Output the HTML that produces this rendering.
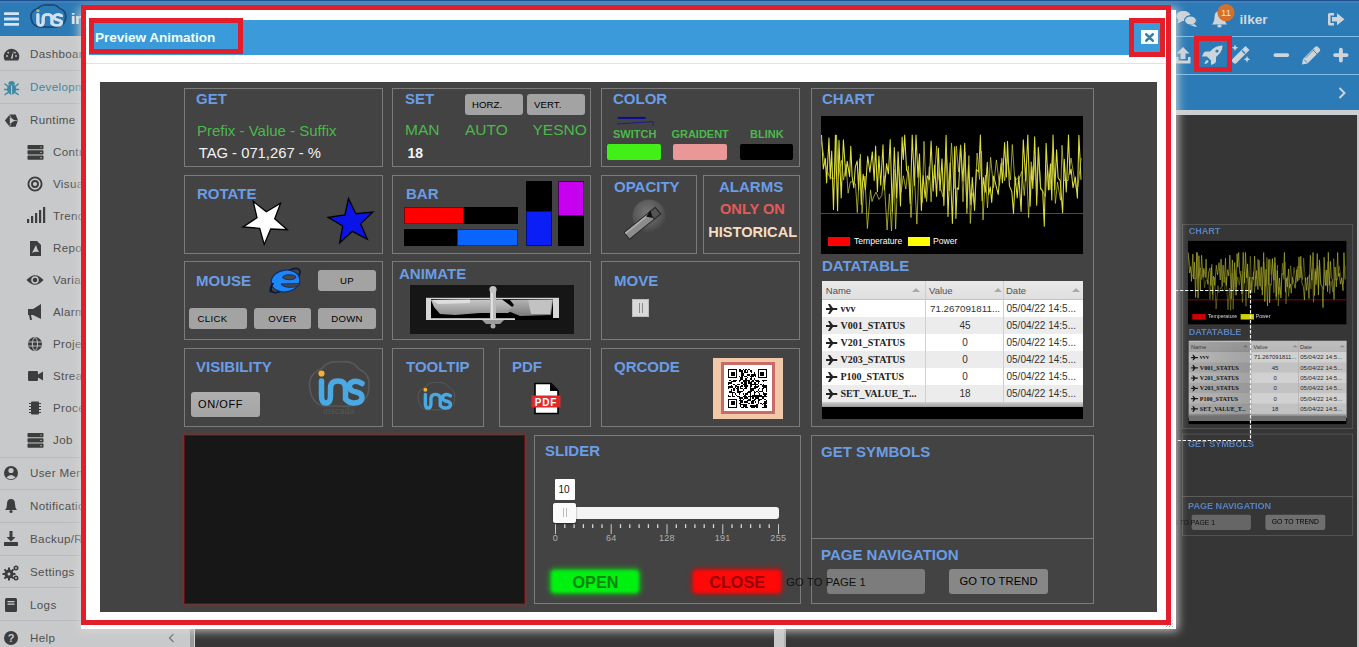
<!DOCTYPE html>
<html><head><meta charset="utf-8">
<style>
*{box-sizing:border-box;margin:0;padding:0}
html,body{width:1359px;height:647px;overflow:hidden;background:#363636;font-family:"Liberation Sans",sans-serif}
.a{position:absolute}
.nav{left:0;top:0;width:1359px;height:37px;background:#2c7bb6;border-top:1px solid #1a508f}
.side{left:0;top:36px;width:190px;height:611px;background:#c8c9ca}
.si{position:absolute;left:0;width:190px;height:33px;border-bottom:1px solid #b9babb;color:#454545;font-size:12px}
.si span{position:absolute;left:30px;top:10px}
.sub{position:absolute;left:0;width:190px;height:32px;color:#454545;font-size:12px}
.sub span{position:absolute;left:53px;top:10px}
.ic{position:absolute}
.st{font-size:11.6px;line-height:14px;white-space:nowrap;letter-spacing:0.35px}
.pn{position:absolute;border:1px solid #7b7b7b;background:#434343}
.lb{position:absolute;color:#6a9de6;font-weight:bold;font-size:15px;line-height:15px;white-space:nowrap}
.gr{color:#4cb84c}
.btn{position:absolute;background:#a9a9a9;border-radius:3px;color:#111;font-size:9px;text-align:center;white-space:nowrap}
.red{position:absolute;border:5px solid #e31e2a}
</style></head><body>

<!-- top nav -->
<div class="a nav"></div>
<!-- sidebar -->
<div class="a side" id="side"></div>
<div class="a st" style="left:30px;top:46.5px;color:#505050">Dashboard</div>
<div class="a st" style="left:30px;top:79.5px;color:#46859c">Development</div>
<div class="a st" style="left:30px;top:112.5px;color:#505050">Runtime</div>
<div class="a st" style="left:53px;top:144.5px;color:#505050">Controls</div>
<div class="a st" style="left:53px;top:176.5px;color:#505050">Visualization</div>
<div class="a st" style="left:53px;top:208.5px;color:#505050">Trends</div>
<div class="a st" style="left:53px;top:240.5px;color:#505050">Reports</div>
<div class="a st" style="left:53px;top:272.5px;color:#505050">Variables</div>
<div class="a st" style="left:53px;top:304.5px;color:#505050">Alarms</div>
<div class="a st" style="left:53px;top:336.5px;color:#505050">Projects</div>
<div class="a st" style="left:53px;top:368.5px;color:#505050">Streams</div>
<div class="a st" style="left:53px;top:400.5px;color:#505050">Processes</div>
<div class="a st" style="left:53px;top:432.5px;color:#505050">Job</div>
<div class="a st" style="left:30px;top:465.5px;color:#505050">User Menu</div>
<div class="a st" style="left:30px;top:498.5px;color:#505050">Notifications</div>
<div class="a st" style="left:30px;top:531.5px;color:#505050">Backup/Restore</div>
<div class="a st" style="left:30px;top:564.5px;color:#505050">Settings</div>
<div class="a st" style="left:30px;top:597.5px;color:#505050">Logs</div>
<div class="a st" style="left:30px;top:630.5px;color:#505050">Help</div>
<div class="a" style="left:0;top:70px;width:190px;height:1px;background:#b8b9ba"></div>
<div class="a" style="left:0;top:103px;width:190px;height:1px;background:#b8b9ba"></div>
<div class="a" style="left:0;top:457px;width:190px;height:1px;background:#b8b9ba"></div>
<div class="a" style="left:0;top:489px;width:190px;height:1px;background:#b8b9ba"></div>
<div class="a" style="left:0;top:522px;width:190px;height:1px;background:#b8b9ba"></div>
<div class="a" style="left:0;top:555px;width:190px;height:1px;background:#b8b9ba"></div>
<div class="a" style="left:0;top:587px;width:190px;height:1px;background:#b8b9ba"></div>
<div class="a" style="left:0;top:620px;width:190px;height:1px;background:#b8b9ba"></div>
<svg class="a" style="left:0;top:0" width="195" height="647" fill="#3d3d3d">
<!-- dashboard -->
<path d="M4.8 60.6 A7.8 7.8 0 1 1 18.2 60.6 Z"/>
<path d="M10.8 58.5 L13.6 50.5 L12.6 58.8 Z" fill="#c8c9ca"/>
<circle cx="7" cy="56" r="0.9" fill="#c8c9ca"/><circle cx="8.2" cy="52.6" r="0.9" fill="#c8c9ca"/><circle cx="16" cy="56" r="0.9" fill="#c8c9ca"/><circle cx="15" cy="52.6" r="0.9" fill="#c8c9ca"/>
<!-- bug -->
<g fill="#3b8aa6"><ellipse cx="11.6" cy="89.3" rx="4.6" ry="5.3"/><path d="M8.2 84.5 Q8.2 80.9 11.6 80.9 Q15 80.9 15 84.5 Z"/>
<g stroke="#3b8aa6" stroke-width="1.5" stroke-linecap="round"><path d="M7.5 86 L5 84 M15.7 86 L18.2 84 M7 89.5 L4.6 89.5 M16.2 89.5 L18.6 89.5 M7.5 92.8 L5 94.5 M15.7 92.8 L18.2 94.5"/></g></g>
<rect x="11.1" y="85.5" width="1" height="8.5" fill="#c8c9ca"/>
<!-- runtime -->
<path fill-rule="evenodd" d="M9.8 114.5 L15.6 114.5 L18 120.3 L15.6 126.8 L9.6 126.8 L4.9 120.6 Z M9.8 117.6 L9.8 123.6 L15.2 120.6 Z"/>
<path d="M9.6 115 L11.6 119 M17.6 120.6 L12.5 120.6 M9.4 126.3 L11.4 122.4" stroke="#c8c9ca" stroke-width="0.7"/>
<!-- controls -->
<rect x="27.5" y="145" width="16" height="4.2" rx="0.8"/><rect x="27.5" y="150.3" width="16" height="4.2" rx="0.8"/><rect x="27.5" y="155.6" width="16" height="4.2" rx="0.8"/><g fill="#c8c9ca"><circle cx="41" cy="147.1" r="0.7"/><circle cx="41" cy="152.4" r="0.7"/><circle cx="41" cy="157.7" r="0.7"/></g>
<!-- visual -->
<circle cx="35" cy="184" r="6.6" fill="none" stroke="#3d3d3d" stroke-width="1.9"/><circle cx="35" cy="184" r="3" fill="none" stroke="#3d3d3d" stroke-width="1.9"/>
<!-- trend -->
<rect x="27" y="219" width="2.2" height="4"/><rect x="31" y="216" width="2.2" height="7"/><rect x="35" y="213" width="2.2" height="10"/><rect x="39" y="210" width="2.2" height="13"/><rect x="43" y="207" width="2.2" height="16" />
<!-- report -->
<path d="M30 241 L37 241 L41 245 L41 256 L30 256 Z"/><path d="M32 253 Q35 247 36 245 Q37 249 39 252 Q35 251 32 253 Z" fill="#c8c9ca"/>
<!-- eye -->
<path d="M26.5 280 Q35 270.5 43.5 280 Q35 289.5 26.5 280 Z"/><circle cx="35" cy="280" r="3.8" fill="#c8c9ca"/><circle cx="35" cy="280" r="2.3"/>
<!-- bullhorn -->
<path d="M28 309 L33 309 L41 304 L41 319 L33 315 L31 315 L32 320 L30 320 L29 315 L28 315 Z"/>
<!-- globe -->
<circle cx="35" cy="344" r="7"/><g stroke="#c8c9ca" stroke-width="0.9" fill="none"><ellipse cx="35" cy="344" rx="2.6" ry="6.4"/><line x1="28.5" y1="342" x2="41.5" y2="342"/><line x1="28.5" y1="346" x2="41.5" y2="346"/></g>
<!-- camera -->
<rect x="28" y="371" width="10" height="10" rx="1.2"/><path d="M38 374.5 L43 371.5 L43 380.5 L38 377.5 Z"/>
<!-- chip -->
<rect x="31" y="401.5" width="8" height="13" rx="1"/><g stroke="#3d3d3d" stroke-width="1"><line x1="29" y1="403.5" x2="41" y2="403.5"/><line x1="29" y1="406.5" x2="41" y2="406.5"/><line x1="29" y1="409.5" x2="41" y2="409.5"/><line x1="29" y1="412.5" x2="41" y2="412.5"/></g>
<!-- job -->
<rect x="27.5" y="433" width="16" height="4.2" rx="0.8"/><rect x="27.5" y="438.3" width="16" height="4.2" rx="0.8"/><rect x="27.5" y="443.6" width="16" height="4.2" rx="0.8"/><g fill="#c8c9ca"><circle cx="41" cy="435.1" r="0.7"/><circle cx="41" cy="440.4" r="0.7"/><circle cx="41" cy="445.7" r="0.7"/></g>
<!-- user -->
<circle cx="11" cy="473" r="7"/><circle cx="11" cy="470.5" r="2.6" fill="#c8c9ca"/><path d="M6.3 477.5 Q11 472.5 15.7 477.5 Q11 481 6.3 477.5 Z" fill="#c8c9ca"/>
<!-- bell -->
<path d="M5 510 Q7 508 7 504 Q7 499 11 499 Q15 499 15 504 Q15 508 17 510 Z"/><circle cx="11" cy="511.5" r="1.6"/>
<!-- download -->
<path d="M9.5 531 L12.5 531 L12.5 537 L15.5 537 L11 541.5 L6.5 537 L9.5 537 Z"/><rect x="4" y="542" width="14" height="4" rx="0.5"/>
<!-- cogs -->
<circle cx="9" cy="574" r="4.5"/><circle cx="9" cy="574" r="1.6" fill="#c8c9ca"/><circle cx="16" cy="568" r="2.5"/><circle cx="16" cy="578" r="2.5"/>
<g stroke="#3d3d3d" stroke-width="2"><line x1="9" y1="567.5" x2="9" y2="580.5"/><line x1="2.5" y1="574" x2="15.5" y2="574"/><line x1="4.4" y1="569.4" x2="13.6" y2="578.6"/><line x1="13.6" y1="569.4" x2="4.4" y2="578.6"/></g><circle cx="9" cy="574" r="1.5" fill="#c8c9ca"/>
<circle cx="16" cy="568" r="0.9" fill="#c8c9ca"/><circle cx="16" cy="578" r="0.9" fill="#c8c9ca"/>
<!-- logs -->
<rect x="5" y="598" width="12" height="14" rx="1.5"/><rect x="7.5" y="601" width="7" height="1.3" fill="#c8c9ca"/><rect x="7.5" y="603.5" width="7" height="1.3" fill="#c8c9ca"/>
<!-- help -->
<circle cx="11" cy="638" r="7"/><text x="11" y="642.2" font-family="Liberation Sans" font-weight="bold" font-size="11" fill="#c8c9ca" text-anchor="middle">?</text>
<!-- collapse -->
<path d="M173.5 634 L169.5 638 L173.5 642" fill="none" stroke="#777" stroke-width="1.3"/>
</svg>
<div class="a" style="left:190px;top:36px;width:5px;height:611px;background:#9a9a9a;border-right:1px solid #d0d0d0"></div>
<!-- main area -->
<div class="a" style="left:195px;top:37px;width:1164px;height:73px;background:#2c7bb6"></div>
<div class="a" style="left:195px;top:110px;width:1164px;height:5px;background:#cdd0d3"></div>
<div class="a" style="left:195px;top:115px;width:1164px;height:532px;background:#363636"></div>
<div class="a" style="left:774px;top:115px;width:12px;height:532px;background:#c8c8c8;border-right:2px solid #b0b0b0"></div>
<div class="a" style="left:1357px;top:115px;width:2px;height:532px;background:#c8c8c8"></div>

<!-- nav content -->
<div class="a" style="left:0;top:1px;width:1359px;height:2px;background:#3f80b9"></div>
<div class="a" style="left:195px;top:36px;width:1164px;height:1px;background:#7fbde6"></div>
<div class="a" style="left:195px;top:74px;width:1164px;height:1px;background:#7fbde6"></div>
<svg class="a" style="left:0;top:0" width="81" height="37">
<g fill="#d2e6f5"><rect x="4" y="12.5" width="15" height="2.6" rx="0.5"/><rect x="4" y="17.7" width="15" height="2.6" rx="0.5"/><rect x="4" y="23" width="15" height="2.6" rx="0.5"/></g>
<g transform="translate(30 4.5) scale(0.585 0.5)"><path d="M2 28 Q-1 14 13 8 Q20 -1 33 1 Q45 -1 51 8 Q62 13 61 25 Q61 40 48 44 Q40 46 30 45 L16 45 Q4 43 2 28 Z" fill="none" stroke="#1d4b77" stroke-width="2.6"/>
<g fill="none" stroke="#cfe0ee" stroke-width="5" stroke-linecap="round" stroke-linejoin="round"><path d="M13.5 20 L13.5 35 Q13.5 42 18 42 Q22.5 42 22.5 35 L22.5 27 Q22.5 20 30 20 Q37.5 20 37.5 27 L37.5 38"/><path d="M54 22.5 Q50 19.5 45.5 20.5 Q40.5 22 41.5 26.5 Q42.5 30 48 31 Q54.5 32.5 54 37 Q53 42.5 45 42 Q41 41.5 39 39.5"/></g>
<circle cx="13.5" cy="12.5" r="2.6" fill="#a9bf7a"/></g>
<text x="71" y="24" font-family="Liberation Sans" font-weight="bold" font-size="15" fill="#d9e8f3">in</text>
</svg>
<svg class="a" style="left:1176px;top:0" width="183" height="110" fill="#cdd4da">
<!-- chat -->
<ellipse cx="7.5" cy="16" rx="7" ry="5"/><path d="M3 19.5 L1.5 23.5 L7.5 20.5 Z"/>
<ellipse cx="15" cy="20.5" rx="6.5" ry="5" stroke="#2c7bb6" stroke-width="1.2"/><path d="M18.5 24 L21 27 L14.5 25.2 Z"/>
<!-- bell -->
<path d="M5 510 Q7 508 7 504 Q7 499 11 499 Q15 499 15 504 Q15 508 17 510 Z"/><circle cx="11" cy="511.5" r="1.6"/>
<!-- download -->
<path d="M9.5 531 L12.5 531 L12.5 537 L15.5 537 L11 541.5 L6.5 537 L9.5 537 Z"/><rect x="4" y="542" width="14" height="4" rx="0.5"/>
<!-- cogs -->
<circle cx="9" cy="574" r="4.5"/><circle cx="9" cy="574" r="1.6" fill="#c8c9ca"/><circle cx="16" cy="568" r="2.5"/><circle cx="16" cy="578" r="2.5"/>
<g stroke="#3d3d3d" stroke-width="2"><line x1="9" y1="567.5" x2="9" y2="580.5"/><line x1="2.5" y1="574" x2="15.5" y2="574"/><line x1="4.4" y1="569.4" x2="13.6" y2="578.6"/><line x1="13.6" y1="569.4" x2="4.4" y2="578.6"/></g><circle cx="9" cy="574" r="1.5" fill="#c8c9ca"/>
<circle cx="16" cy="568" r="0.9" fill="#c8c9ca"/><circle cx="16" cy="578" r="0.9" fill="#c8c9ca"/>
<!-- logs -->
<rect x="5" y="598" width="12" height="14" rx="1.5"/><rect x="7.5" y="601" width="7" height="1.3" fill="#c8c9ca"/><rect x="7.5" y="603.5" width="7" height="1.3" fill="#c8c9ca"/>
<!-- help -->
<circle cx="11" cy="638" r="7"/><text x="11" y="642.2" font-family="Liberation Sans" font-weight="bold" font-size="11" fill="#c8c9ca" text-anchor="middle">?</text>
<!-- collapse -->
<path d="M173.5 634 L169.5 638 L173.5 642" fill="none" stroke="#777" stroke-width="1.3"/>
</svg>
<div class="a" style="left:190px;top:36px;width:5px;height:611px;background:#9a9a9a;border-right:1px solid #d0d0d0"></div>
<!-- main area -->
<div class="a" style="left:195px;top:37px;width:1164px;height:73px;background:#2c7bb6"></div>
<div class="a" style="left:195px;top:110px;width:1164px;height:5px;background:#cdd0d3"></div>
<div class="a" style="left:195px;top:115px;width:1164px;height:532px;background:#363636"></div>
<div class="a" style="left:774px;top:115px;width:12px;height:532px;background:#c8c8c8;border-right:2px solid #b0b0b0"></div>
<div class="a" style="left:1357px;top:115px;width:2px;height:532px;background:#c8c8c8"></div>

<!-- nav content -->
<div class="a" style="left:0;top:1px;width:1359px;height:2px;background:#3f80b9"></div>
<div class="a" style="left:195px;top:36px;width:1164px;height:1px;background:#7fbde6"></div>
<div class="a" style="left:195px;top:74px;width:1164px;height:1px;background:#7fbde6"></div>
<svg class="a" style="left:0;top:0" width="81" height="37">
<g fill="#d2e6f5"><rect x="4" y="12.5" width="15" height="2.6" rx="0.5"/><rect x="4" y="17.7" width="15" height="2.6" rx="0.5"/><rect x="4" y="23" width="15" height="2.6" rx="0.5"/></g>
<g transform="translate(30 4.5) scale(0.585 0.5)"><path d="M2 28 Q-1 14 13 8 Q20 -1 33 1 Q45 -1 51 8 Q62 13 61 25 Q61 40 48 44 Q40 46 30 45 L16 45 Q4 43 2 28 Z" fill="none" stroke="#1d4b77" stroke-width="2.6"/>
<g fill="none" stroke="#cfe0ee" stroke-width="5" stroke-linecap="round" stroke-linejoin="round"><path d="M13.5 20 L13.5 35 Q13.5 42 18 42 Q22.5 42 22.5 35 L22.5 27 Q22.5 20 30 20 Q37.5 20 37.5 27 L37.5 38"/><path d="M54 22.5 Q50 19.5 45.5 20.5 Q40.5 22 41.5 26.5 Q42.5 30 48 31 Q54.5 32.5 54 37 Q53 42.5 45 42 Q41 41.5 39 39.5"/></g>
<circle cx="13.5" cy="12.5" r="2.6" fill="#a9bf7a"/></g>
<text x="71" y="24" font-family="Liberation Sans" font-weight="bold" font-size="15" fill="#d9e8f3">in</text>
</svg>
<svg class="a" style="left:1176px;top:0" width="183" height="110" fill="#cdd4da">
<!-- chat -->
<ellipse cx="7" cy="16" rx="6.5" ry="4.8"/><path d="M3 19 L1.5 23 L7 20.5 Z"/>
<ellipse cx="14.5" cy="20.5" rx="6" ry="4.6" stroke="#2c7bb6" stroke-width="1.2"/><path d="M18 24 L20.5 27 L14 25 Z"/>
<!-- bell -->
<path d="M36 24.5 Q38.5 22 38.5 17 Q38.5 11 43.5 11 Q48.5 11 48.5 17 Q48.5 22 51 24.5 Z"/><ellipse cx="43.5" cy="26" rx="2.2" ry="1.6"/>
<circle cx="50" cy="12.6" r="8.6" fill="#d4702a"/>
<text x="50" y="16" font-family="Liberation Sans" font-size="9.5" fill="#f3e0cc" text-anchor="middle">11</text>
<text x="63.6" y="23.5" font-family="Liberation Sans" font-weight="bold" font-size="13.6" fill="#d0dae2">ilker</text>
<!-- signout -->
<path d="M158 13 L153.5 13 Q152 13 152 14.5 L152 24 Q152 25.5 153.5 25.5 L158 25.5 L158 23 L154.5 23 L154.5 15.5 L158 15.5 Z"/>
<path d="M156 17 L161 17 L161 13.2 L168.5 19.2 L161 25.2 L161 21.4 L156 21.4 Z"/>
<!-- upload -->
<path d="M7 47 L13.5 53.5 L9.5 53.5 L9.5 59 L4.5 59 L4.5 53.5 L0.5 53.5 Z" />
<path d="M0 57 L2.5 57 L2.5 60.5 L12 60.5 L12 57 L14.5 57 L14.5 63.5 L0 63.5 Z"/>
<!-- rocket -->
<path d="M46.5 45.5 Q39 45.5 34 51.5 L30 51.5 Q28.5 51.5 27.5 53 L26 56.5 L31 56.5 L35 60.5 L35 65 L38.5 63.5 Q40 62.5 40 61 L40 57 Q46.5 52 46.5 45.5 Z"/><circle cx="41" cy="51" r="1.6" fill="#2c7bb6"/>
<path d="M31.5 60 Q29 60.5 28.5 64 Q32 63.5 32.5 61 Z"/>
<!-- wand -->
<path d="M69.5 46 L73.5 50 L60.5 63 Q59 64.5 57.5 63 L56.5 62 Q55 60.5 56.5 59 Z"/><line x1="66" y1="50.5" x2="69" y2="53.5" stroke="#2c7bb6" stroke-width="1.2"/>
<path d="M59 44.5 l1 2.3 l2.3 1 l-2.3 1 l-1 2.3 l-1 -2.3 l-2.3 -1 l2.3 -1 Z"/><path d="M71 56 l1 2.3 l2.3 1 l-2.3 1 l-1 2.3 l-1 -2.3 l-2.3 -1 l2.3 -1 Z"/>
<!-- minus -->
<rect x="97.5" y="53.2" width="15.7" height="3.8" rx="1.9"/>
<!-- pencil -->
<path d="M139 47 Q140.5 45.5 142 47 L143.5 48.5 Q145 50 143.5 51.5 L131.5 63.5 L126 64.5 L127 59 Z"/><path d="M128 59.5 L131 62.5" stroke="#2c7bb6" stroke-width="0.9"/><path d="M129.5 58 L138.5 49" stroke="#2c7bb6" stroke-width="0.7"/><path d="M136.5 49.5 L141 54" stroke="#2c7bb6" stroke-width="0.9"/>
<!-- plus -->
<rect x="157.2" y="53.2" width="15.3" height="3.8" rx="1.9"/><rect x="163" y="47.8" width="3.8" height="14.6" rx="1.9"/>
<!-- chevron -->
<path d="M163.5 88 L168.5 93 L163.5 98" fill="none" stroke="#cdd4da" stroke-width="2"/>
</svg>


<!-- mini -->
<div class="a" style="left:1182px;top:224px;transform:scale(0.6045);transform-origin:0 0;filter:brightness(0.82)"><div class="a" style="left:-811px;top:-88px"><div class="a" style="left:811px;top:88px;width:283px;height:339px;border:1px solid #7b7b7b"></div>
<div class="a" style="left:811px;top:435px;width:283px;height:104px;border:1px solid #7b7b7b"></div>
<div class="a" style="left:811px;top:538px;width:283px;height:66px;border:1px solid #7b7b7b"></div>
<div class="lb" style="left:822px;top:91.24px">CHART</div>
<div class="lb" style="left:822px;top:258.24px">DATATABLE</div>
<div class="lb" style="left:821px;top:444.24px">GET SYMBOLS</div>
<div class="lb" style="left:821px;top:547.24px">PAGE NAVIGATION</div>
<div class="a" style="left:821px;top:116px;width:262px;height:138px;background:#000"></div>
<svg class="a" style="left:0;top:0" width="1100" height="260"><line x1="821" y1="213.5" x2="1083" y2="213.5" stroke="#c81818" stroke-width="1.2"/><polyline points="821.5,135.0 823.3,169.0 825.4,158.5 826.6,182.9 829.0,137.9 830.3,178.9 831.7,151.1 833.5,209.5 835.4,135.0 837.6,210.7 839.0,140.4 841.2,197.9 843.4,139.7 845.8,176.2 847.2,161.2 849.6,176.6 850.8,146.2 852.1,176.5 853.8,187.8 855.3,166.9 857.2,161.0 858.6,189.9 859.8,158.9 861.3,204.4 863.1,174.2 865.4,189.7 867.7,156.2 869.9,172.2 872.3,151.9 874.2,180.6 875.6,146.0 877.4,191.8 878.9,156.0 880.7,185.1 883.0,144.7 884.3,189.7 886.6,163.6 888.4,173.8 890.2,139.5 892.3,211.8 894.3,147.4 896.5,197.9 898.1,151.8 900.5,206.0 902.1,137.1 903.3,159.5 904.7,135.0 906.6,170.1 908.6,173.2 910.3,203.6 912.2,135.0 914.5,185.6 916.0,135.0 918.0,177.2 919.5,153.9 921.4,210.5 923.1,175.6 925.1,198.0 927.2,175.7 929.4,179.7 931.1,141.1 933.2,191.0 934.6,165.0 936.6,196.4 938.4,148.0 940.0,190.8 942.0,158.9 943.9,205.6 946.1,135.3 948.0,216.4 950.1,162.8 952.4,223.5 954.7,146.7 955.9,218.4 957.1,187.9 958.6,189.3 960.6,146.1 963.0,181.3 964.7,143.2 966.9,208.0 968.5,164.9 970.9,204.7 972.3,177.4 974.6,210.4 976.4,169.6 978.7,171.8 980.4,135.0 982.1,200.7 983.4,177.6 985.3,192.2 987.3,162.3 988.7,194.4 990.3,187.1 991.7,202.4 993.6,176.1 995.9,185.1 998.2,194.4 999.6,178.9 1001.2,163.3 1002.4,182.9 1004.6,142.5 1006.4,177.1 1007.5,141.4 1009.4,185.9 1011.8,191.5 1013.5,213.5 1015.2,176.8 1017.2,197.9 1018.8,175.9 1021.1,211.4 1023.3,139.7 1025.7,181.0 1027.8,135.0 1030.1,206.3 1031.7,166.5 1032.8,188.4 1034.7,136.8 1036.7,205.2 1038.3,147.3 1040.6,188.7 1042.7,191.2 1044.3,226.3 1046.1,143.2 1048.4,189.9 1050.5,163.9 1051.8,200.0 1053.0,135.0 1054.8,189.5 1056.6,149.8 1058.1,177.8 1060.2,180.6 1062.6,212.8 1064.3,159.2 1066.3,192.1 1068.5,135.1 1069.9,174.4 1071.1,169.0 1073.0,187.6 1075.3,177.1 1077.4,198.3 1078.9,135.3 1081.0,179.8" fill="none" stroke="#dede3c" stroke-width="1.05" stroke-linejoin="round"/><polyline points="821.5,141.2 824.2,159.0 826.8,170.1 829.2,176.0 832.2,178.3 834.7,178.6 836.5,135.0 838.4,176.2 841.5,160.5 843.6,180.1 846.1,164.3 848.1,193.2 850.4,181.8 853.1,181.8 855.5,183.9 857.3,212.6 860.4,154.2 862.0,213.1 864.9,176.1 867.4,228.5 870.5,189.9 872.0,201.5 873.5,197.2 876.0,192.1 879.0,199.4 881.8,195.4 883.9,175.6 887.1,230.0 889.4,193.9 891.5,231.0 894.0,169.3 895.6,229.1 898.4,163.2 901.0,192.3 903.3,175.7 905.8,189.1 908.4,165.8 911.0,217.5 913.9,167.0 916.9,224.1 919.2,161.7 922.3,202.5 924.0,141.4 926.6,201.6 929.3,166.6 931.1,201.8 932.6,174.9 934.5,178.3 936.6,145.9 938.5,176.7 940.6,188.6 943.1,197.1 946.2,150.5 949.1,190.9 951.5,143.2 954.0,188.7 956.4,146.0 958.5,172.0 960.6,144.8 963.0,201.8 965.0,152.2 966.9,213.4 968.9,155.6 970.3,223.5 972.1,192.7 974.6,205.1 977.1,153.0 979.5,179.4 981.5,151.2 983.0,219.9 985.4,175.1 987.5,207.9 990.6,157.3 993.5,187.8 996.4,159.9 999.5,185.4 1001.8,158.2 1004.7,180.8 1007.3,157.6 1010.5,179.9 1012.3,144.5 1014.9,181.5 1017.4,178.1 1019.0,179.4 1021.8,171.5 1024.3,195.5 1026.3,163.6 1028.6,217.6 1031.2,161.8 1033.5,180.0 1035.2,156.9 1036.8,195.5 1038.6,151.3 1040.6,187.3 1042.2,190.3 1045.4,196.6 1047.4,164.8 1049.9,190.0 1052.5,150.6 1055.4,203.4 1057.5,182.2 1060.5,200.3 1062.0,145.3 1064.2,180.6 1066.3,179.8 1068.0,180.8 1071.0,158.0 1073.7,174.8 1076.3,188.4 1078.0,186.4 1081.2,157.9" fill="none" stroke="#c8c838" stroke-width="0.9" stroke-linejoin="round" opacity="0.85"/></svg>
<div class="a" style="left:828px;top:237px;width:22px;height:9px;background:#f00"></div>
<div class="a" style="left:854px;top:237.39px;font-size:8.6px;line-height:8.6px;color:#fff;font-weight:normal;white-space:nowrap;font-family:'Liberation Sans';">Temperature</div>
<div class="a" style="left:908px;top:237px;width:22px;height:9px;background:#ff0"></div>
<div class="a" style="left:933px;top:237.39px;font-size:8.6px;line-height:8.6px;color:#fff;font-weight:normal;white-space:nowrap;font-family:'Liberation Sans';">Power</div>
<div class="a" style="left:822px;top:281px;width:261px;height:138px;background:#000"></div>
<div class="a" style="left:822px;top:281px;width:261px;height:126px;background:#fff"></div>
<div class="a" style="left:822px;top:281px;width:261px;height:19px;background:linear-gradient(#e9e9e9,#dfdfdf);border-bottom:1px solid #c4c4c4"></div>
<div class="a" style="left:825.8px;top:285.88px;font-size:9.5px;line-height:9.5px;color:#505050;font-weight:normal;white-space:nowrap;font-family:'Liberation Sans';">Name</div>
<div class="a" style="left:929px;top:285.88px;font-size:9.5px;line-height:9.5px;color:#505050;font-weight:normal;white-space:nowrap;font-family:'Liberation Sans';">Value</div>
<div class="a" style="left:1006px;top:285.88px;font-size:9.5px;line-height:9.5px;color:#505050;font-weight:normal;white-space:nowrap;font-family:'Liberation Sans';">Date</div>
<svg class="a" style="left:911px;top:287px" width="10" height="6"><path d="M1 5 L5 1 L9 5 Z" fill="#aaa"/></svg>
<svg class="a" style="left:993px;top:287px" width="10" height="6"><path d="M1 5 L5 1 L9 5 Z" fill="#aaa"/></svg>
<svg class="a" style="left:1071px;top:287px" width="10" height="6"><path d="M1 5 L5 1 L9 5 Z" fill="#aaa"/></svg>
<div class="a" style="left:822px;top:300px;width:261px;height:17px;background:#fff"></div>
<svg class="a" style="left:826px;top:304px" width="12" height="10"><path d="M0 4 L4 4 L2 0 L4 0 L7 4 L11 4 Q12 5 11 6 L7 6 L4 10 L2 10 L4 6 L0 6 Z" fill="#222"/></svg>
<div class="a" style="left:840.5px;top:304.43px;font-size:10px;line-height:10px;color:#222;font-weight:bold;white-space:nowrap;font-family:'Liberation Serif';">vvv</div>
<div class="a" style="left:930px;top:304.45px;font-size:9.8px;line-height:9.8px;color:#333;font-weight:normal;white-space:nowrap;font-family:'Liberation Sans';">71.267091811...</div>
<div class="a" style="left:1006.5px;top:304.43px;font-size:10px;line-height:10px;color:#333;font-weight:normal;white-space:nowrap;font-family:'Liberation Sans';">05/04/22 14:5...</div>
<div class="a" style="left:822px;top:317px;width:261px;height:17px;background:#ececec"></div>
<svg class="a" style="left:826px;top:321px" width="12" height="10"><path d="M0 4 L4 4 L2 0 L4 0 L7 4 L11 4 Q12 5 11 6 L7 6 L4 10 L2 10 L4 6 L0 6 Z" fill="#222"/></svg>
<div class="a" style="left:840.5px;top:321.43px;font-size:10px;line-height:10px;color:#222;font-weight:bold;white-space:nowrap;font-family:'Liberation Serif';">V001_STATUS</div>
<div class="a" style="left:926px;top:321.2px;width:78px;text-align:center;font-size:10px;line-height:10px;color:#333">45</div>
<div class="a" style="left:1006.5px;top:321.43px;font-size:10px;line-height:10px;color:#333;font-weight:normal;white-space:nowrap;font-family:'Liberation Sans';">05/04/22 14:5...</div>
<div class="a" style="left:822px;top:334px;width:261px;height:17px;background:#fff"></div>
<svg class="a" style="left:826px;top:338px" width="12" height="10"><path d="M0 4 L4 4 L2 0 L4 0 L7 4 L11 4 Q12 5 11 6 L7 6 L4 10 L2 10 L4 6 L0 6 Z" fill="#222"/></svg>
<div class="a" style="left:840.5px;top:338.43px;font-size:10px;line-height:10px;color:#222;font-weight:bold;white-space:nowrap;font-family:'Liberation Serif';">V201_STATUS</div>
<div class="a" style="left:926px;top:338.2px;width:78px;text-align:center;font-size:10px;line-height:10px;color:#333">0</div>
<div class="a" style="left:1006.5px;top:338.43px;font-size:10px;line-height:10px;color:#333;font-weight:normal;white-space:nowrap;font-family:'Liberation Sans';">05/04/22 14:5...</div>
<div class="a" style="left:822px;top:351px;width:261px;height:17px;background:#ececec"></div>
<svg class="a" style="left:826px;top:355px" width="12" height="10"><path d="M0 4 L4 4 L2 0 L4 0 L7 4 L11 4 Q12 5 11 6 L7 6 L4 10 L2 10 L4 6 L0 6 Z" fill="#222"/></svg>
<div class="a" style="left:840.5px;top:355.43px;font-size:10px;line-height:10px;color:#222;font-weight:bold;white-space:nowrap;font-family:'Liberation Serif';">V203_STATUS</div>
<div class="a" style="left:926px;top:355.2px;width:78px;text-align:center;font-size:10px;line-height:10px;color:#333">0</div>
<div class="a" style="left:1006.5px;top:355.43px;font-size:10px;line-height:10px;color:#333;font-weight:normal;white-space:nowrap;font-family:'Liberation Sans';">05/04/22 14:5...</div>
<div class="a" style="left:822px;top:368px;width:261px;height:17px;background:#fff"></div>
<svg class="a" style="left:826px;top:372px" width="12" height="10"><path d="M0 4 L4 4 L2 0 L4 0 L7 4 L11 4 Q12 5 11 6 L7 6 L4 10 L2 10 L4 6 L0 6 Z" fill="#222"/></svg>
<div class="a" style="left:840.5px;top:372.43px;font-size:10px;line-height:10px;color:#222;font-weight:bold;white-space:nowrap;font-family:'Liberation Serif';">P100_STATUS</div>
<div class="a" style="left:926px;top:372.2px;width:78px;text-align:center;font-size:10px;line-height:10px;color:#333">0</div>
<div class="a" style="left:1006.5px;top:372.43px;font-size:10px;line-height:10px;color:#333;font-weight:normal;white-space:nowrap;font-family:'Liberation Sans';">05/04/22 14:5...</div>
<div class="a" style="left:822px;top:385px;width:261px;height:17px;background:#ececec"></div>
<svg class="a" style="left:826px;top:389px" width="12" height="10"><path d="M0 4 L4 4 L2 0 L4 0 L7 4 L11 4 Q12 5 11 6 L7 6 L4 10 L2 10 L4 6 L0 6 Z" fill="#222"/></svg>
<div class="a" style="left:840.5px;top:389.43px;font-size:10px;line-height:10px;color:#222;font-weight:bold;white-space:nowrap;font-family:'Liberation Serif';">SET_VALUE_T...</div>
<div class="a" style="left:926px;top:389.2px;width:78px;text-align:center;font-size:10px;line-height:10px;color:#333">18</div>
<div class="a" style="left:1006.5px;top:389.43px;font-size:10px;line-height:10px;color:#333;font-weight:normal;white-space:nowrap;font-family:'Liberation Sans';">05/04/22 14:5...</div>
<div class="a" style="left:925px;top:281px;width:1px;height:124px;background:#cfcfcf"></div>
<div class="a" style="left:1003px;top:281px;width:1px;height:124px;background:#cfcfcf"></div>
<div class="a" style="left:822px;top:402px;width:261px;height:5px;background:linear-gradient(#d0d0d0,#9a9a9a)"></div>
<div class="a" style="left:827px;top:569px;width:98px;height:25px;background:#7c7c7c;border-radius:3px"></div>
<div class="a" style="left:786.3px;top:576.58px;font-size:11.2px;line-height:11.2px;color:#111;font-weight:normal;white-space:nowrap;font-family:'Liberation Sans';letter-spacing:0.1px">GO TO PAGE 1</div>
<div class="a" style="left:949px;top:569px;width:99px;height:25px;background:#878787;border-radius:3px;font-size:11.2px;line-height:25px;text-align:center;color:#000;white-space:nowrap;letter-spacing:0.1px">GO TO TREND</div></div></div>
<!-- /mini -->
<div class="a" style="left:1189px;top:342px;width:62px;height:75px;background:linear-gradient(90deg,rgba(0,0,0,.12),rgba(0,0,0,.22));"></div>
<div class="a" style="left:1189px;top:416px;width:157px;height:5px;background:#707070"></div>
<!-- dashed selection -->
<svg class="a" style="left:1150px;top:285px" width="110" height="160"><path d="M0 5.5 L100.5 5.5 L100.5 155.5 L0 155.5" fill="none" stroke="#f0f0f0" stroke-width="1.2" stroke-dasharray="3.4 1.6"/></svg>

<!-- modal -->
<div class="a" id="modal" style="left:81px;top:10px;width:1095px;height:619px;background:#fff;box-shadow:0 0 9px 2px rgba(215,215,215,.85)">
  <div class="a" style="left:8px;top:10px;width:1071px;height:35px;background:#3b9ad9"></div>
  <div class="a" style="left:14px;top:19.5px;color:#ecffff;font-weight:bold;font-size:13.6px;line-height:16px;letter-spacing:-0.05px">Preview Animation</div>
  <div class="a" style="left:1060px;top:20px;width:17px;height:14px;background:#f4ffff"></div>
  <svg class="a" style="left:1064px;top:23px" width="9" height="9"><path d="M1.3 1.3 L7.7 7.7 M7.7 1.3 L1.3 7.7" stroke="#3b7ea2" stroke-width="2.6" stroke-linecap="round"/></svg>
  <div class="a" style="left:5px;top:53px;width:1080px;height:1px;background:#e2e2e2"></div>
  <div class="a" id="content" style="left:19px;top:72px;width:1057px;height:530px;background:#434343"></div>
</div>

<!-- panels -->
<div class="pn" style="left:184px;top:88px;width:199px;height:79px;"></div>
<div class="pn" style="left:392px;top:88px;width:199px;height:79px;"></div>
<div class="pn" style="left:601px;top:88px;width:199px;height:79px;"></div>
<div class="pn" style="left:184px;top:175px;width:199px;height:79px;"></div>
<div class="pn" style="left:392px;top:175px;width:199px;height:79px;"></div>
<div class="pn" style="left:601px;top:175px;width:96px;height:79px;"></div>
<div class="pn" style="left:703px;top:175px;width:97px;height:79px;"></div>
<div class="pn" style="left:184px;top:261px;width:199px;height:79px;"></div>
<div class="pn" style="left:392px;top:261px;width:199px;height:79px;"></div>
<div class="pn" style="left:601px;top:261px;width:199px;height:79px;"></div>
<div class="pn" style="left:184px;top:348px;width:199px;height:79px;"></div>
<div class="pn" style="left:392px;top:348px;width:92px;height:79px;"></div>
<div class="pn" style="left:499px;top:348px;width:92px;height:79px;"></div>
<div class="pn" style="left:601px;top:348px;width:199px;height:79px;"></div>
<div class="pn" style="left:534px;top:435px;width:267px;height:169px;"></div>
<div class="a" style="left:184px;top:435px;width:341px;height:169px;background:#171717;border:1px solid #5e1212;box-shadow:0 0 3px 1px rgba(160,40,40,.55)"></div>
<div class="lb" style="left:196px;top:91px">GET</div>
<div class="lb" style="left:405px;top:91px">SET</div>
<div class="lb" style="left:613px;top:91px">COLOR</div>
<div class="lb" style="left:197px;top:186px">ROTATE</div>
<div class="lb" style="left:406px;top:186px">BAR</div>
<div class="lb" style="left:614px;top:179px">OPACITY</div>
<div class="lb" style="left:719px;top:179px">ALARMS</div>
<div class="lb" style="left:196px;top:273px">MOUSE</div>
<div class="lb" style="left:399px;top:266px">ANIMATE</div>
<div class="lb" style="left:614px;top:273px">MOVE</div>
<div class="lb" style="left:196px;top:359px">VISIBILITY</div>
<div class="lb" style="left:406px;top:359px">TOOLTIP</div>
<div class="lb" style="left:512px;top:359px">PDF</div>
<div class="lb" style="left:614px;top:359px">QRCODE</div>
<div class="lb" style="left:545px;top:443px">SLIDER</div>
<!-- content -->
<div class="a" style="left:197px;top:123.44px;font-size:15px;line-height:15px;color:#4cb84c;font-weight:normal;white-space:nowrap;font-family:'Liberation Sans';">Prefix - Value - Suffix</div>
<div class="a" style="left:198.7px;top:145.56px;font-size:14.8px;line-height:14.8px;color:#f3f0f3;font-weight:normal;white-space:nowrap;font-family:'Liberation Sans';">TAG - 071,267 - %</div>
<div class="a" style="left:465px;top:94px;width:58px;height:21px;background:#a3a3a3;border-radius:3px;font-size:9.6px;line-height:21px;text-align:center;color:#000;white-space:nowrap;text-align:left;padding-left:7px;letter-spacing:0.1px;line-height:22.5px">HORZ.</div>
<div class="a" style="left:527px;top:94px;width:58px;height:21px;background:#a3a3a3;border-radius:3px;font-size:9.6px;line-height:21px;text-align:center;color:#000;white-space:nowrap;text-align:left;padding-left:7px;letter-spacing:0.1px;line-height:22.5px">VERT.</div>
<div class="a" style="left:405px;top:121.98px;font-size:15.5px;line-height:15.5px;color:#4cb84c;font-weight:normal;white-space:nowrap;font-family:'Liberation Sans';">MAN</div>
<div class="a" style="left:465px;top:121.98px;font-size:15.5px;line-height:15.5px;color:#4cb84c;font-weight:normal;white-space:nowrap;font-family:'Liberation Sans';">AUTO</div>
<div class="a" style="left:532.5px;top:121.98px;font-size:15.5px;line-height:15.5px;color:#4cb84c;font-weight:normal;white-space:nowrap;font-family:'Liberation Sans';">YESNO</div>
<div class="a" style="left:407.5px;top:145.95px;font-size:14px;line-height:14px;color:#f5f2f5;font-weight:bold;white-space:nowrap;font-family:'Liberation Sans';">18</div>
<svg class="a" style="left:600px;top:110px" width="60" height="20"><line x1="17.7" y1="7.9" x2="45.6" y2="7.9" stroke="#0a0a9a" stroke-width="2"/><polyline points="17,14 53,11.6 53,16" fill="none" stroke="#1c1c8a" stroke-width="1"/></svg>
<div class="a" style="left:613px;top:129.11px;font-size:11px;line-height:11px;color:#4cb84c;font-weight:bold;white-space:nowrap;font-family:'Liberation Sans';">SWITCH</div>
<div class="a" style="left:671.4px;top:129.11px;font-size:11px;line-height:11px;color:#4cb84c;font-weight:bold;white-space:nowrap;font-family:'Liberation Sans';">GRAIDENT</div>
<div class="a" style="left:750.1px;top:129.11px;font-size:11px;line-height:11px;color:#4cb84c;font-weight:bold;white-space:nowrap;font-family:'Liberation Sans';">BLINK</div>
<div class="a" style="left:607px;top:144px;width:54px;height:16px;background:#42ef17;border-radius:2px"></div>
<div class="a" style="left:673px;top:144px;width:54px;height:16px;background:#e99797;border-radius:2px"></div>
<div class="a" style="left:740px;top:144px;width:53px;height:16px;background:#000;border-radius:2px"></div>
<svg class="a" style="left:0;top:0" width="400" height="260"><polygon points="264.2,244.4 259.7,228.3 243.1,226.9 257.0,217.7 253.2,201.4 266.3,211.8 280.6,203.2 274.7,218.8 287.3,229.7 270.7,229.0" fill="#fff" stroke="#000" stroke-width="1.3" stroke-linejoin="miter"/><polygon points="348.5,198.5 355.9,213.7 372.8,212.1 360.6,223.8 367.4,239.4 352.4,231.4 339.7,242.7 342.7,226.0 328.1,217.4 344.9,215.0" fill="#0a14e6" stroke="#000" stroke-width="1.3" stroke-linejoin="miter"/></svg>
<div class="a" style="left:404px;top:207px;width:114px;height:17px;background:#000"></div>
<div class="a" style="left:404px;top:207px;width:60px;height:17px;background:#ff0000;border:1px solid #8a0000"></div>
<div class="a" style="left:404px;top:229px;width:114px;height:17px;background:#000"></div>
<div class="a" style="left:457px;top:229px;width:61px;height:17px;background:#0a64ff;border:1px solid #0a2a8a"></div>
<div class="a" style="left:526px;top:181px;width:26px;height:65px;background:#000"></div>
<div class="a" style="left:526px;top:211px;width:26px;height:35px;background:#0a1ef5;border:1px solid #001080"></div>
<div class="a" style="left:558px;top:181px;width:26px;height:65px;background:#000"></div>
<div class="a" style="left:558px;top:181px;width:26px;height:35px;background:#c800f0;border:1px solid #4a0060"></div>
<svg class="a" style="left:615px;top:196px" width="60" height="50">
<defs><radialGradient id="kg" cx="0.45" cy="0.4" r="0.65"><stop offset="0" stop-color="#777"/><stop offset="0.6" stop-color="#5a5a5a"/><stop offset="1" stop-color="#404040"/></radialGradient></defs>
<circle cx="34" cy="20" r="16.5" fill="url(#kg)"/>
<g transform="translate(2 -1.5) rotate(-39 26 28)"><rect x="5" y="24" width="40" height="8.5" fill="#8c8c8c" stroke="#2a2a2a" stroke-width="1"/><rect x="5.5" y="24.5" width="39" height="1.6" fill="#b0b0b0"/><rect x="37" y="24" width="8" height="8.5" fill="#555" stroke="#2a2a2a" stroke-width="1"/></g>
<path d="M35.5 14.5 L37.5 22 L31 20.5 Z" fill="#111"/>
</svg>
<div class="a" style="left:720px;top:201.98px;font-size:14.6px;line-height:14.6px;color:#e35a5a;font-weight:bold;white-space:nowrap;font-family:'Liberation Sans';">ONLY ON</div>
<div class="a" style="left:708.2px;top:224.78px;font-size:14.6px;line-height:14.6px;color:#f8dcc0;font-weight:bold;white-space:nowrap;font-family:'Liberation Sans';">HISTORICAL</div>
<div class="a" style="left:318px;top:270px;width:58px;height:21px;background:#a3a3a3;border-radius:3px;font-size:9.6px;line-height:21px;text-align:center;color:#000;white-space:nowrap;letter-spacing:0.3px">UP</div>
<div class="a" style="left:189px;top:308px;width:58px;height:21px;background:#a3a3a3;border-radius:3px;font-size:9.6px;line-height:21px;text-align:center;color:#000;white-space:nowrap;letter-spacing:0.3px;padding-right:11px">CLICK</div>
<div class="a" style="left:254px;top:308px;width:57px;height:21px;background:#a3a3a3;border-radius:3px;font-size:9.6px;line-height:21px;text-align:center;color:#000;white-space:nowrap;letter-spacing:0.3px">OVER</div>
<div class="a" style="left:318px;top:308px;width:58px;height:21px;background:#a3a3a3;border-radius:3px;font-size:9.6px;line-height:21px;text-align:center;color:#000;white-space:nowrap;letter-spacing:0.3px">DOWN</div>
<svg class="a" style="left:264px;top:262px" width="42" height="36">
<ellipse cx="21.5" cy="18.5" rx="17.5" ry="7" transform="rotate(-38 21.5 18.5)" fill="none" stroke="#0b1838" stroke-width="1.7"/>
<ellipse cx="21.5" cy="19" rx="14.3" ry="10.8" transform="rotate(-10 21.5 19)" fill="#1f86f5" stroke="#0a2a6a" stroke-width="1.1"/>
<ellipse cx="25.3" cy="15.2" rx="6.6" ry="2.5" fill="#474747" stroke="#0a2a6a" stroke-width="0.9"/>
<path d="M17 22 L36 21.5 L35.5 23.3 Q30 25.8 25 25.3 Q18.5 24.8 17 22 Z" fill="#474747" stroke="#0a2a6a" stroke-width="0.9"/>
<path d="M7 30.5 Q4.5 27 9.5 21" fill="none" stroke="#0b1838" stroke-width="1.7"/>
</svg>
<div class="a" style="left:410px;top:285px;width:164px;height:49px;background:#161616"></div>
<svg class="a" style="left:410px;top:285px" width="164" height="49">
<defs><linearGradient id="bl" x1="0" y1="0" x2="0" y2="1"><stop offset="0" stop-color="#c8c8c8"/><stop offset="1" stop-color="#8e8e8e"/></linearGradient>
<linearGradient id="br" x1="0" y1="0" x2="0" y2="1"><stop offset="0" stop-color="#b4b4b4"/><stop offset="1" stop-color="#7a7a7a"/></linearGradient></defs>
<rect x="16" y="12.8" width="133" height="22.2" fill="#d6d6d6"/>
<rect x="21" y="14.2" width="122" height="19" fill="#000"/>
<path d="M21 15 L92 14.5 L105 24 L98 28 L70 28 L45 30 L30 29 L24 22 Z" fill="url(#bl)"/>
<path d="M22 15 L60 14.5 L60 18 L28 19 Z" fill="#dedede"/>
<path d="M100 15 L143 14.5 L141 30 L110 31 L98 26 L104 20 Z" fill="url(#br)"/>
<path d="M118 15 L142 15 L140 29 L121 29 Z" fill="#c2c2c2"/>
<path d="M105 33 L149 33 L149 35 L105 35 Z" fill="#000"/>
<rect x="80" y="6" width="6" height="28" fill="#bdbdbd"/><rect x="81" y="6" width="2" height="28" fill="#e0e0e0"/>
<circle cx="83" cy="4.5" r="3.6" fill="#c4c4c4"/>
<path d="M72 35 L94 35 L90 39 L76 39 Z" fill="#9a9a9a"/><circle cx="83" cy="41" r="2.5" fill="#aaa"/>
</svg>
<div class="a" style="left:632px;top:299px;width:17px;height:18px;background:#d9d9d9;border:1px solid #bdbdbd"></div>
<div class="a" style="left:639px;top:303px;width:1px;height:10px;background:#8a8a8a"></div>
<div class="a" style="left:642px;top:303px;width:1px;height:10px;background:#8a8a8a"></div>
<div class="a" style="left:191px;top:392px;width:69px;height:25px;background:linear-gradient(#b0b0b0,#a4a4a4);border-radius:3px;font-size:11px;line-height:25px;text-align:center;color:#000;white-space:nowrap;text-align:left;padding-left:7px;letter-spacing:0.6px">ON/OFF</div>
<svg class="a" style="left:308px;top:361px;overflow:visible" width="62.0" height="50.0" viewBox="0 0 62 50"><path d="M2 28 Q-1 14 13 8 Q20 -1 33 1 Q45 -1 51 8 Q62 13 61 25 Q61 40 48 44 Q40 46 30 45 L16 45 Q4 43 2 28 Z" fill="none" stroke="#585858" stroke-width="1.6"/><g fill="none" stroke="#4aa9e2" stroke-width="5.5" stroke-linecap="round" stroke-linejoin="round"><path d="M13.5 20 L13.5 35 Q13.5 42 18 42 Q22.5 42 22.5 35 L22.5 27 Q22.5 20 30 20 Q37.5 20 37.5 27 L37.5 38"/><path d="M54 22.5 Q50 19.5 45.5 20.5 Q40.5 22 41.5 26.5 Q42.5 30 48 31 Q54.5 32.5 54 37 Q53 42.5 45 42 Q41 41.5 39 39.5"/></g><circle cx="13.5" cy="12.5" r="3.1" fill="#f2b134"/><text x="31" y="53" font-family="Liberation Sans" font-size="8.5" fill="#575757" text-anchor="middle" letter-spacing="0.3">inscada</text></svg>
<svg class="a" style="left:417px;top:382px;overflow:visible" width="38.4" height="31.0" viewBox="0 0 62 50"><path d="M2 28 Q-1 14 13 8 Q20 -1 33 1 Q45 -1 51 8 Q62 13 61 25 Q61 40 48 44 Q40 46 30 45 L16 45 Q4 43 2 28 Z" fill="none" stroke="#585858" stroke-width="1.6"/><g fill="none" stroke="#4aa9e2" stroke-width="5.5" stroke-linecap="round" stroke-linejoin="round"><path d="M13.5 20 L13.5 35 Q13.5 42 18 42 Q22.5 42 22.5 35 L22.5 27 Q22.5 20 30 20 Q37.5 20 37.5 27 L37.5 38"/><path d="M54 22.5 Q50 19.5 45.5 20.5 Q40.5 22 41.5 26.5 Q42.5 30 48 31 Q54.5 32.5 54 37 Q53 42.5 45 42 Q41 41.5 39 39.5"/></g><circle cx="13.5" cy="12.5" r="3.1" fill="#f2b134"/></svg>
<svg class="a" style="left:530px;top:382px" width="32" height="34">
<path d="M5 1.5 L21 1.5 L28 8.5 L28 31.5 L5 31.5 Z" fill="#fff" stroke="#000" stroke-width="1.6"/>
<path d="M20 1.5 L28 9 L20 9 Z" fill="#000"/>
<rect x="1.5" y="13.5" width="29" height="12" fill="#e02a2a"/>
<text x="16" y="23.5" font-family="Liberation Sans" font-weight="bold" font-size="10" fill="#fff" text-anchor="middle" letter-spacing="0.8">PDF</text>
</svg>
<div class="a" style="left:713px;top:358px;width:70px;height:61px;background:#f1c9a9"></div>
<div class="a" style="left:721px;top:362px;width:54px;height:52px;background:#fff;border:3px solid #c96a66"></div>
<svg class="a" style="left:728px;top:369px" width="39" height="39" shape-rendering="crispEdges"><rect x="0.00" y="0.00" width="1.39" height="1.39"/><rect x="1.34" y="0.00" width="1.39" height="1.39"/><rect x="2.69" y="0.00" width="1.39" height="1.39"/><rect x="4.03" y="0.00" width="1.39" height="1.39"/><rect x="5.38" y="0.00" width="1.39" height="1.39"/><rect x="6.72" y="0.00" width="1.39" height="1.39"/><rect x="8.07" y="0.00" width="1.39" height="1.39"/><rect x="10.76" y="0.00" width="1.39" height="1.39"/><rect x="12.10" y="0.00" width="1.39" height="1.39"/><rect x="14.79" y="0.00" width="1.39" height="1.39"/><rect x="17.48" y="0.00" width="1.39" height="1.39"/><rect x="20.17" y="0.00" width="1.39" height="1.39"/><rect x="29.59" y="0.00" width="1.39" height="1.39"/><rect x="30.93" y="0.00" width="1.39" height="1.39"/><rect x="32.28" y="0.00" width="1.39" height="1.39"/><rect x="33.62" y="0.00" width="1.39" height="1.39"/><rect x="34.97" y="0.00" width="1.39" height="1.39"/><rect x="36.31" y="0.00" width="1.39" height="1.39"/><rect x="37.66" y="0.00" width="1.39" height="1.39"/><rect x="0.00" y="1.34" width="1.39" height="1.39"/><rect x="8.07" y="1.34" width="1.39" height="1.39"/><rect x="10.76" y="1.34" width="1.39" height="1.39"/><rect x="12.10" y="1.34" width="1.39" height="1.39"/><rect x="13.45" y="1.34" width="1.39" height="1.39"/><rect x="16.14" y="1.34" width="1.39" height="1.39"/><rect x="18.83" y="1.34" width="1.39" height="1.39"/><rect x="21.52" y="1.34" width="1.39" height="1.39"/><rect x="22.86" y="1.34" width="1.39" height="1.39"/><rect x="29.59" y="1.34" width="1.39" height="1.39"/><rect x="37.66" y="1.34" width="1.39" height="1.39"/><rect x="0.00" y="2.69" width="1.39" height="1.39"/><rect x="2.69" y="2.69" width="1.39" height="1.39"/><rect x="4.03" y="2.69" width="1.39" height="1.39"/><rect x="5.38" y="2.69" width="1.39" height="1.39"/><rect x="8.07" y="2.69" width="1.39" height="1.39"/><rect x="13.45" y="2.69" width="1.39" height="1.39"/><rect x="16.14" y="2.69" width="1.39" height="1.39"/><rect x="17.48" y="2.69" width="1.39" height="1.39"/><rect x="18.83" y="2.69" width="1.39" height="1.39"/><rect x="22.86" y="2.69" width="1.39" height="1.39"/><rect x="25.55" y="2.69" width="1.39" height="1.39"/><rect x="29.59" y="2.69" width="1.39" height="1.39"/><rect x="32.28" y="2.69" width="1.39" height="1.39"/><rect x="33.62" y="2.69" width="1.39" height="1.39"/><rect x="34.97" y="2.69" width="1.39" height="1.39"/><rect x="37.66" y="2.69" width="1.39" height="1.39"/><rect x="0.00" y="4.03" width="1.39" height="1.39"/><rect x="2.69" y="4.03" width="1.39" height="1.39"/><rect x="4.03" y="4.03" width="1.39" height="1.39"/><rect x="5.38" y="4.03" width="1.39" height="1.39"/><rect x="8.07" y="4.03" width="1.39" height="1.39"/><rect x="13.45" y="4.03" width="1.39" height="1.39"/><rect x="14.79" y="4.03" width="1.39" height="1.39"/><rect x="25.55" y="4.03" width="1.39" height="1.39"/><rect x="29.59" y="4.03" width="1.39" height="1.39"/><rect x="32.28" y="4.03" width="1.39" height="1.39"/><rect x="33.62" y="4.03" width="1.39" height="1.39"/><rect x="34.97" y="4.03" width="1.39" height="1.39"/><rect x="37.66" y="4.03" width="1.39" height="1.39"/><rect x="0.00" y="5.38" width="1.39" height="1.39"/><rect x="2.69" y="5.38" width="1.39" height="1.39"/><rect x="4.03" y="5.38" width="1.39" height="1.39"/><rect x="5.38" y="5.38" width="1.39" height="1.39"/><rect x="8.07" y="5.38" width="1.39" height="1.39"/><rect x="13.45" y="5.38" width="1.39" height="1.39"/><rect x="14.79" y="5.38" width="1.39" height="1.39"/><rect x="18.83" y="5.38" width="1.39" height="1.39"/><rect x="20.17" y="5.38" width="1.39" height="1.39"/><rect x="22.86" y="5.38" width="1.39" height="1.39"/><rect x="24.21" y="5.38" width="1.39" height="1.39"/><rect x="25.55" y="5.38" width="1.39" height="1.39"/><rect x="26.90" y="5.38" width="1.39" height="1.39"/><rect x="29.59" y="5.38" width="1.39" height="1.39"/><rect x="32.28" y="5.38" width="1.39" height="1.39"/><rect x="33.62" y="5.38" width="1.39" height="1.39"/><rect x="34.97" y="5.38" width="1.39" height="1.39"/><rect x="37.66" y="5.38" width="1.39" height="1.39"/><rect x="0.00" y="6.72" width="1.39" height="1.39"/><rect x="8.07" y="6.72" width="1.39" height="1.39"/><rect x="10.76" y="6.72" width="1.39" height="1.39"/><rect x="13.45" y="6.72" width="1.39" height="1.39"/><rect x="16.14" y="6.72" width="1.39" height="1.39"/><rect x="17.48" y="6.72" width="1.39" height="1.39"/><rect x="21.52" y="6.72" width="1.39" height="1.39"/><rect x="22.86" y="6.72" width="1.39" height="1.39"/><rect x="24.21" y="6.72" width="1.39" height="1.39"/><rect x="26.90" y="6.72" width="1.39" height="1.39"/><rect x="29.59" y="6.72" width="1.39" height="1.39"/><rect x="37.66" y="6.72" width="1.39" height="1.39"/><rect x="0.00" y="8.07" width="1.39" height="1.39"/><rect x="1.34" y="8.07" width="1.39" height="1.39"/><rect x="2.69" y="8.07" width="1.39" height="1.39"/><rect x="4.03" y="8.07" width="1.39" height="1.39"/><rect x="5.38" y="8.07" width="1.39" height="1.39"/><rect x="6.72" y="8.07" width="1.39" height="1.39"/><rect x="8.07" y="8.07" width="1.39" height="1.39"/><rect x="12.10" y="8.07" width="1.39" height="1.39"/><rect x="13.45" y="8.07" width="1.39" height="1.39"/><rect x="18.83" y="8.07" width="1.39" height="1.39"/><rect x="22.86" y="8.07" width="1.39" height="1.39"/><rect x="29.59" y="8.07" width="1.39" height="1.39"/><rect x="30.93" y="8.07" width="1.39" height="1.39"/><rect x="32.28" y="8.07" width="1.39" height="1.39"/><rect x="33.62" y="8.07" width="1.39" height="1.39"/><rect x="34.97" y="8.07" width="1.39" height="1.39"/><rect x="36.31" y="8.07" width="1.39" height="1.39"/><rect x="37.66" y="8.07" width="1.39" height="1.39"/><rect x="12.10" y="9.41" width="1.39" height="1.39"/><rect x="13.45" y="9.41" width="1.39" height="1.39"/><rect x="17.48" y="9.41" width="1.39" height="1.39"/><rect x="21.52" y="9.41" width="1.39" height="1.39"/><rect x="22.86" y="9.41" width="1.39" height="1.39"/><rect x="25.55" y="9.41" width="1.39" height="1.39"/><rect x="1.34" y="10.76" width="1.39" height="1.39"/><rect x="5.38" y="10.76" width="1.39" height="1.39"/><rect x="6.72" y="10.76" width="1.39" height="1.39"/><rect x="8.07" y="10.76" width="1.39" height="1.39"/><rect x="10.76" y="10.76" width="1.39" height="1.39"/><rect x="12.10" y="10.76" width="1.39" height="1.39"/><rect x="14.79" y="10.76" width="1.39" height="1.39"/><rect x="16.14" y="10.76" width="1.39" height="1.39"/><rect x="17.48" y="10.76" width="1.39" height="1.39"/><rect x="18.83" y="10.76" width="1.39" height="1.39"/><rect x="20.17" y="10.76" width="1.39" height="1.39"/><rect x="24.21" y="10.76" width="1.39" height="1.39"/><rect x="26.90" y="10.76" width="1.39" height="1.39"/><rect x="28.24" y="10.76" width="1.39" height="1.39"/><rect x="29.59" y="10.76" width="1.39" height="1.39"/><rect x="33.62" y="10.76" width="1.39" height="1.39"/><rect x="34.97" y="10.76" width="1.39" height="1.39"/><rect x="36.31" y="10.76" width="1.39" height="1.39"/><rect x="37.66" y="10.76" width="1.39" height="1.39"/><rect x="2.69" y="12.10" width="1.39" height="1.39"/><rect x="4.03" y="12.10" width="1.39" height="1.39"/><rect x="5.38" y="12.10" width="1.39" height="1.39"/><rect x="6.72" y="12.10" width="1.39" height="1.39"/><rect x="10.76" y="12.10" width="1.39" height="1.39"/><rect x="14.79" y="12.10" width="1.39" height="1.39"/><rect x="16.14" y="12.10" width="1.39" height="1.39"/><rect x="17.48" y="12.10" width="1.39" height="1.39"/><rect x="20.17" y="12.10" width="1.39" height="1.39"/><rect x="22.86" y="12.10" width="1.39" height="1.39"/><rect x="24.21" y="12.10" width="1.39" height="1.39"/><rect x="28.24" y="12.10" width="1.39" height="1.39"/><rect x="29.59" y="12.10" width="1.39" height="1.39"/><rect x="30.93" y="12.10" width="1.39" height="1.39"/><rect x="34.97" y="12.10" width="1.39" height="1.39"/><rect x="0.00" y="13.45" width="1.39" height="1.39"/><rect x="1.34" y="13.45" width="1.39" height="1.39"/><rect x="2.69" y="13.45" width="1.39" height="1.39"/><rect x="13.45" y="13.45" width="1.39" height="1.39"/><rect x="16.14" y="13.45" width="1.39" height="1.39"/><rect x="17.48" y="13.45" width="1.39" height="1.39"/><rect x="20.17" y="13.45" width="1.39" height="1.39"/><rect x="21.52" y="13.45" width="1.39" height="1.39"/><rect x="22.86" y="13.45" width="1.39" height="1.39"/><rect x="25.55" y="13.45" width="1.39" height="1.39"/><rect x="26.90" y="13.45" width="1.39" height="1.39"/><rect x="29.59" y="13.45" width="1.39" height="1.39"/><rect x="0.00" y="14.79" width="1.39" height="1.39"/><rect x="5.38" y="14.79" width="1.39" height="1.39"/><rect x="9.41" y="14.79" width="1.39" height="1.39"/><rect x="10.76" y="14.79" width="1.39" height="1.39"/><rect x="14.79" y="14.79" width="1.39" height="1.39"/><rect x="16.14" y="14.79" width="1.39" height="1.39"/><rect x="17.48" y="14.79" width="1.39" height="1.39"/><rect x="21.52" y="14.79" width="1.39" height="1.39"/><rect x="22.86" y="14.79" width="1.39" height="1.39"/><rect x="24.21" y="14.79" width="1.39" height="1.39"/><rect x="25.55" y="14.79" width="1.39" height="1.39"/><rect x="26.90" y="14.79" width="1.39" height="1.39"/><rect x="28.24" y="14.79" width="1.39" height="1.39"/><rect x="32.28" y="14.79" width="1.39" height="1.39"/><rect x="34.97" y="14.79" width="1.39" height="1.39"/><rect x="2.69" y="16.14" width="1.39" height="1.39"/><rect x="6.72" y="16.14" width="1.39" height="1.39"/><rect x="8.07" y="16.14" width="1.39" height="1.39"/><rect x="13.45" y="16.14" width="1.39" height="1.39"/><rect x="16.14" y="16.14" width="1.39" height="1.39"/><rect x="17.48" y="16.14" width="1.39" height="1.39"/><rect x="18.83" y="16.14" width="1.39" height="1.39"/><rect x="21.52" y="16.14" width="1.39" height="1.39"/><rect x="22.86" y="16.14" width="1.39" height="1.39"/><rect x="26.90" y="16.14" width="1.39" height="1.39"/><rect x="29.59" y="16.14" width="1.39" height="1.39"/><rect x="33.62" y="16.14" width="1.39" height="1.39"/><rect x="34.97" y="16.14" width="1.39" height="1.39"/><rect x="36.31" y="16.14" width="1.39" height="1.39"/><rect x="37.66" y="16.14" width="1.39" height="1.39"/><rect x="0.00" y="17.48" width="1.39" height="1.39"/><rect x="1.34" y="17.48" width="1.39" height="1.39"/><rect x="2.69" y="17.48" width="1.39" height="1.39"/><rect x="4.03" y="17.48" width="1.39" height="1.39"/><rect x="6.72" y="17.48" width="1.39" height="1.39"/><rect x="9.41" y="17.48" width="1.39" height="1.39"/><rect x="12.10" y="17.48" width="1.39" height="1.39"/><rect x="17.48" y="17.48" width="1.39" height="1.39"/><rect x="21.52" y="17.48" width="1.39" height="1.39"/><rect x="25.55" y="17.48" width="1.39" height="1.39"/><rect x="26.90" y="17.48" width="1.39" height="1.39"/><rect x="28.24" y="17.48" width="1.39" height="1.39"/><rect x="34.97" y="17.48" width="1.39" height="1.39"/><rect x="36.31" y="17.48" width="1.39" height="1.39"/><rect x="37.66" y="17.48" width="1.39" height="1.39"/><rect x="0.00" y="18.83" width="1.39" height="1.39"/><rect x="5.38" y="18.83" width="1.39" height="1.39"/><rect x="8.07" y="18.83" width="1.39" height="1.39"/><rect x="9.41" y="18.83" width="1.39" height="1.39"/><rect x="12.10" y="18.83" width="1.39" height="1.39"/><rect x="13.45" y="18.83" width="1.39" height="1.39"/><rect x="16.14" y="18.83" width="1.39" height="1.39"/><rect x="17.48" y="18.83" width="1.39" height="1.39"/><rect x="21.52" y="18.83" width="1.39" height="1.39"/><rect x="22.86" y="18.83" width="1.39" height="1.39"/><rect x="24.21" y="18.83" width="1.39" height="1.39"/><rect x="25.55" y="18.83" width="1.39" height="1.39"/><rect x="26.90" y="18.83" width="1.39" height="1.39"/><rect x="30.93" y="18.83" width="1.39" height="1.39"/><rect x="33.62" y="18.83" width="1.39" height="1.39"/><rect x="34.97" y="18.83" width="1.39" height="1.39"/><rect x="37.66" y="18.83" width="1.39" height="1.39"/><rect x="2.69" y="20.17" width="1.39" height="1.39"/><rect x="5.38" y="20.17" width="1.39" height="1.39"/><rect x="9.41" y="20.17" width="1.39" height="1.39"/><rect x="14.79" y="20.17" width="1.39" height="1.39"/><rect x="21.52" y="20.17" width="1.39" height="1.39"/><rect x="22.86" y="20.17" width="1.39" height="1.39"/><rect x="24.21" y="20.17" width="1.39" height="1.39"/><rect x="29.59" y="20.17" width="1.39" height="1.39"/><rect x="33.62" y="20.17" width="1.39" height="1.39"/><rect x="37.66" y="20.17" width="1.39" height="1.39"/><rect x="1.34" y="21.52" width="1.39" height="1.39"/><rect x="2.69" y="21.52" width="1.39" height="1.39"/><rect x="9.41" y="21.52" width="1.39" height="1.39"/><rect x="10.76" y="21.52" width="1.39" height="1.39"/><rect x="12.10" y="21.52" width="1.39" height="1.39"/><rect x="13.45" y="21.52" width="1.39" height="1.39"/><rect x="20.17" y="21.52" width="1.39" height="1.39"/><rect x="21.52" y="21.52" width="1.39" height="1.39"/><rect x="22.86" y="21.52" width="1.39" height="1.39"/><rect x="25.55" y="21.52" width="1.39" height="1.39"/><rect x="28.24" y="21.52" width="1.39" height="1.39"/><rect x="30.93" y="21.52" width="1.39" height="1.39"/><rect x="32.28" y="21.52" width="1.39" height="1.39"/><rect x="33.62" y="21.52" width="1.39" height="1.39"/><rect x="37.66" y="21.52" width="1.39" height="1.39"/><rect x="1.34" y="22.86" width="1.39" height="1.39"/><rect x="2.69" y="22.86" width="1.39" height="1.39"/><rect x="4.03" y="22.86" width="1.39" height="1.39"/><rect x="5.38" y="22.86" width="1.39" height="1.39"/><rect x="9.41" y="22.86" width="1.39" height="1.39"/><rect x="10.76" y="22.86" width="1.39" height="1.39"/><rect x="12.10" y="22.86" width="1.39" height="1.39"/><rect x="18.83" y="22.86" width="1.39" height="1.39"/><rect x="20.17" y="22.86" width="1.39" height="1.39"/><rect x="21.52" y="22.86" width="1.39" height="1.39"/><rect x="25.55" y="22.86" width="1.39" height="1.39"/><rect x="26.90" y="22.86" width="1.39" height="1.39"/><rect x="29.59" y="22.86" width="1.39" height="1.39"/><rect x="34.97" y="22.86" width="1.39" height="1.39"/><rect x="4.03" y="24.21" width="1.39" height="1.39"/><rect x="6.72" y="24.21" width="1.39" height="1.39"/><rect x="10.76" y="24.21" width="1.39" height="1.39"/><rect x="14.79" y="24.21" width="1.39" height="1.39"/><rect x="17.48" y="24.21" width="1.39" height="1.39"/><rect x="18.83" y="24.21" width="1.39" height="1.39"/><rect x="21.52" y="24.21" width="1.39" height="1.39"/><rect x="25.55" y="24.21" width="1.39" height="1.39"/><rect x="30.93" y="24.21" width="1.39" height="1.39"/><rect x="34.97" y="24.21" width="1.39" height="1.39"/><rect x="36.31" y="24.21" width="1.39" height="1.39"/><rect x="37.66" y="24.21" width="1.39" height="1.39"/><rect x="0.00" y="25.55" width="1.39" height="1.39"/><rect x="4.03" y="25.55" width="1.39" height="1.39"/><rect x="8.07" y="25.55" width="1.39" height="1.39"/><rect x="16.14" y="25.55" width="1.39" height="1.39"/><rect x="21.52" y="25.55" width="1.39" height="1.39"/><rect x="24.21" y="25.55" width="1.39" height="1.39"/><rect x="25.55" y="25.55" width="1.39" height="1.39"/><rect x="26.90" y="25.55" width="1.39" height="1.39"/><rect x="28.24" y="25.55" width="1.39" height="1.39"/><rect x="29.59" y="25.55" width="1.39" height="1.39"/><rect x="30.93" y="25.55" width="1.39" height="1.39"/><rect x="32.28" y="25.55" width="1.39" height="1.39"/><rect x="36.31" y="25.55" width="1.39" height="1.39"/><rect x="0.00" y="26.90" width="1.39" height="1.39"/><rect x="1.34" y="26.90" width="1.39" height="1.39"/><rect x="4.03" y="26.90" width="1.39" height="1.39"/><rect x="5.38" y="26.90" width="1.39" height="1.39"/><rect x="9.41" y="26.90" width="1.39" height="1.39"/><rect x="10.76" y="26.90" width="1.39" height="1.39"/><rect x="14.79" y="26.90" width="1.39" height="1.39"/><rect x="16.14" y="26.90" width="1.39" height="1.39"/><rect x="17.48" y="26.90" width="1.39" height="1.39"/><rect x="20.17" y="26.90" width="1.39" height="1.39"/><rect x="21.52" y="26.90" width="1.39" height="1.39"/><rect x="22.86" y="26.90" width="1.39" height="1.39"/><rect x="24.21" y="26.90" width="1.39" height="1.39"/><rect x="25.55" y="26.90" width="1.39" height="1.39"/><rect x="26.90" y="26.90" width="1.39" height="1.39"/><rect x="28.24" y="26.90" width="1.39" height="1.39"/><rect x="29.59" y="26.90" width="1.39" height="1.39"/><rect x="30.93" y="26.90" width="1.39" height="1.39"/><rect x="32.28" y="26.90" width="1.39" height="1.39"/><rect x="33.62" y="26.90" width="1.39" height="1.39"/><rect x="34.97" y="26.90" width="1.39" height="1.39"/><rect x="36.31" y="26.90" width="1.39" height="1.39"/><rect x="37.66" y="26.90" width="1.39" height="1.39"/><rect x="10.76" y="28.24" width="1.39" height="1.39"/><rect x="12.10" y="28.24" width="1.39" height="1.39"/><rect x="13.45" y="28.24" width="1.39" height="1.39"/><rect x="16.14" y="28.24" width="1.39" height="1.39"/><rect x="17.48" y="28.24" width="1.39" height="1.39"/><rect x="18.83" y="28.24" width="1.39" height="1.39"/><rect x="21.52" y="28.24" width="1.39" height="1.39"/><rect x="24.21" y="28.24" width="1.39" height="1.39"/><rect x="26.90" y="28.24" width="1.39" height="1.39"/><rect x="28.24" y="28.24" width="1.39" height="1.39"/><rect x="29.59" y="28.24" width="1.39" height="1.39"/><rect x="33.62" y="28.24" width="1.39" height="1.39"/><rect x="34.97" y="28.24" width="1.39" height="1.39"/><rect x="0.00" y="29.59" width="1.39" height="1.39"/><rect x="1.34" y="29.59" width="1.39" height="1.39"/><rect x="2.69" y="29.59" width="1.39" height="1.39"/><rect x="4.03" y="29.59" width="1.39" height="1.39"/><rect x="5.38" y="29.59" width="1.39" height="1.39"/><rect x="6.72" y="29.59" width="1.39" height="1.39"/><rect x="8.07" y="29.59" width="1.39" height="1.39"/><rect x="12.10" y="29.59" width="1.39" height="1.39"/><rect x="14.79" y="29.59" width="1.39" height="1.39"/><rect x="20.17" y="29.59" width="1.39" height="1.39"/><rect x="21.52" y="29.59" width="1.39" height="1.39"/><rect x="25.55" y="29.59" width="1.39" height="1.39"/><rect x="26.90" y="29.59" width="1.39" height="1.39"/><rect x="29.59" y="29.59" width="1.39" height="1.39"/><rect x="30.93" y="29.59" width="1.39" height="1.39"/><rect x="32.28" y="29.59" width="1.39" height="1.39"/><rect x="36.31" y="29.59" width="1.39" height="1.39"/><rect x="0.00" y="30.93" width="1.39" height="1.39"/><rect x="8.07" y="30.93" width="1.39" height="1.39"/><rect x="10.76" y="30.93" width="1.39" height="1.39"/><rect x="12.10" y="30.93" width="1.39" height="1.39"/><rect x="13.45" y="30.93" width="1.39" height="1.39"/><rect x="18.83" y="30.93" width="1.39" height="1.39"/><rect x="20.17" y="30.93" width="1.39" height="1.39"/><rect x="21.52" y="30.93" width="1.39" height="1.39"/><rect x="24.21" y="30.93" width="1.39" height="1.39"/><rect x="25.55" y="30.93" width="1.39" height="1.39"/><rect x="29.59" y="30.93" width="1.39" height="1.39"/><rect x="30.93" y="30.93" width="1.39" height="1.39"/><rect x="37.66" y="30.93" width="1.39" height="1.39"/><rect x="0.00" y="32.28" width="1.39" height="1.39"/><rect x="2.69" y="32.28" width="1.39" height="1.39"/><rect x="4.03" y="32.28" width="1.39" height="1.39"/><rect x="5.38" y="32.28" width="1.39" height="1.39"/><rect x="8.07" y="32.28" width="1.39" height="1.39"/><rect x="12.10" y="32.28" width="1.39" height="1.39"/><rect x="13.45" y="32.28" width="1.39" height="1.39"/><rect x="16.14" y="32.28" width="1.39" height="1.39"/><rect x="17.48" y="32.28" width="1.39" height="1.39"/><rect x="18.83" y="32.28" width="1.39" height="1.39"/><rect x="22.86" y="32.28" width="1.39" height="1.39"/><rect x="24.21" y="32.28" width="1.39" height="1.39"/><rect x="26.90" y="32.28" width="1.39" height="1.39"/><rect x="29.59" y="32.28" width="1.39" height="1.39"/><rect x="36.31" y="32.28" width="1.39" height="1.39"/><rect x="37.66" y="32.28" width="1.39" height="1.39"/><rect x="0.00" y="33.62" width="1.39" height="1.39"/><rect x="2.69" y="33.62" width="1.39" height="1.39"/><rect x="4.03" y="33.62" width="1.39" height="1.39"/><rect x="5.38" y="33.62" width="1.39" height="1.39"/><rect x="8.07" y="33.62" width="1.39" height="1.39"/><rect x="10.76" y="33.62" width="1.39" height="1.39"/><rect x="12.10" y="33.62" width="1.39" height="1.39"/><rect x="20.17" y="33.62" width="1.39" height="1.39"/><rect x="22.86" y="33.62" width="1.39" height="1.39"/><rect x="24.21" y="33.62" width="1.39" height="1.39"/><rect x="29.59" y="33.62" width="1.39" height="1.39"/><rect x="32.28" y="33.62" width="1.39" height="1.39"/><rect x="34.97" y="33.62" width="1.39" height="1.39"/><rect x="36.31" y="33.62" width="1.39" height="1.39"/><rect x="37.66" y="33.62" width="1.39" height="1.39"/><rect x="0.00" y="34.97" width="1.39" height="1.39"/><rect x="2.69" y="34.97" width="1.39" height="1.39"/><rect x="4.03" y="34.97" width="1.39" height="1.39"/><rect x="5.38" y="34.97" width="1.39" height="1.39"/><rect x="8.07" y="34.97" width="1.39" height="1.39"/><rect x="12.10" y="34.97" width="1.39" height="1.39"/><rect x="13.45" y="34.97" width="1.39" height="1.39"/><rect x="14.79" y="34.97" width="1.39" height="1.39"/><rect x="16.14" y="34.97" width="1.39" height="1.39"/><rect x="17.48" y="34.97" width="1.39" height="1.39"/><rect x="28.24" y="34.97" width="1.39" height="1.39"/><rect x="33.62" y="34.97" width="1.39" height="1.39"/><rect x="36.31" y="34.97" width="1.39" height="1.39"/><rect x="0.00" y="36.31" width="1.39" height="1.39"/><rect x="8.07" y="36.31" width="1.39" height="1.39"/><rect x="12.10" y="36.31" width="1.39" height="1.39"/><rect x="14.79" y="36.31" width="1.39" height="1.39"/><rect x="16.14" y="36.31" width="1.39" height="1.39"/><rect x="17.48" y="36.31" width="1.39" height="1.39"/><rect x="21.52" y="36.31" width="1.39" height="1.39"/><rect x="22.86" y="36.31" width="1.39" height="1.39"/><rect x="24.21" y="36.31" width="1.39" height="1.39"/><rect x="25.55" y="36.31" width="1.39" height="1.39"/><rect x="26.90" y="36.31" width="1.39" height="1.39"/><rect x="28.24" y="36.31" width="1.39" height="1.39"/><rect x="36.31" y="36.31" width="1.39" height="1.39"/><rect x="37.66" y="36.31" width="1.39" height="1.39"/><rect x="0.00" y="37.66" width="1.39" height="1.39"/><rect x="1.34" y="37.66" width="1.39" height="1.39"/><rect x="2.69" y="37.66" width="1.39" height="1.39"/><rect x="4.03" y="37.66" width="1.39" height="1.39"/><rect x="5.38" y="37.66" width="1.39" height="1.39"/><rect x="6.72" y="37.66" width="1.39" height="1.39"/><rect x="8.07" y="37.66" width="1.39" height="1.39"/><rect x="13.45" y="37.66" width="1.39" height="1.39"/><rect x="14.79" y="37.66" width="1.39" height="1.39"/><rect x="17.48" y="37.66" width="1.39" height="1.39"/><rect x="18.83" y="37.66" width="1.39" height="1.39"/><rect x="22.86" y="37.66" width="1.39" height="1.39"/><rect x="24.21" y="37.66" width="1.39" height="1.39"/><rect x="25.55" y="37.66" width="1.39" height="1.39"/><rect x="28.24" y="37.66" width="1.39" height="1.39"/><rect x="33.62" y="37.66" width="1.39" height="1.39"/><rect x="34.97" y="37.66" width="1.39" height="1.39"/><rect x="36.31" y="37.66" width="1.39" height="1.39"/><rect x="37.66" y="37.66" width="1.39" height="1.39"/></svg>
<div class="a" style="left:555px;top:479px;width:20px;height:21px;background:#fff;border-radius:1px"></div>
<div class="a" style="left:558.5px;top:484.82px;font-size:10px;line-height:10px;color:#111;font-weight:normal;white-space:nowrap;font-family:'Liberation Sans';">10</div>
<div class="a" style="left:554px;top:507px;width:225px;height:12px;background:#f4f4f4;border-radius:3px"></div>
<div class="a" style="left:553px;top:503px;width:23px;height:20px;background:#fafafa;border-radius:2px;box-shadow:0 1px 2px rgba(0,0,0,.5)"></div>
<div class="a" style="left:563px;top:508px;width:1px;height:9px;background:#bbb"></div>
<div class="a" style="left:566px;top:508px;width:1px;height:9px;background:#bbb"></div>
<svg class="a" style="left:550px;top:520px" width="240" height="26"><line x1="5.5" y1="4.2" x2="5.5" y2="14" stroke="#c8c8c8" stroke-width="1"/><line x1="14.8" y1="4.2" x2="14.8" y2="8" stroke="#d6d6d6" stroke-width="1.3"/><line x1="24.1" y1="4.2" x2="24.1" y2="8" stroke="#d6d6d6" stroke-width="1.3"/><line x1="33.4" y1="4.2" x2="33.4" y2="8" stroke="#d6d6d6" stroke-width="1.3"/><line x1="42.7" y1="4.2" x2="42.7" y2="8" stroke="#d6d6d6" stroke-width="1.3"/><line x1="52.0" y1="4.2" x2="52.0" y2="8" stroke="#d6d6d6" stroke-width="1.3"/><line x1="61.2" y1="4.2" x2="61.2" y2="14" stroke="#c8c8c8" stroke-width="1"/><line x1="70.5" y1="4.2" x2="70.5" y2="8" stroke="#d6d6d6" stroke-width="1.3"/><line x1="79.8" y1="4.2" x2="79.8" y2="8" stroke="#d6d6d6" stroke-width="1.3"/><line x1="89.1" y1="4.2" x2="89.1" y2="8" stroke="#d6d6d6" stroke-width="1.3"/><line x1="98.4" y1="4.2" x2="98.4" y2="8" stroke="#d6d6d6" stroke-width="1.3"/><line x1="107.7" y1="4.2" x2="107.7" y2="8" stroke="#d6d6d6" stroke-width="1.3"/><line x1="117.0" y1="4.2" x2="117.0" y2="14" stroke="#c8c8c8" stroke-width="1"/><line x1="126.3" y1="4.2" x2="126.3" y2="8" stroke="#d6d6d6" stroke-width="1.3"/><line x1="135.6" y1="4.2" x2="135.6" y2="8" stroke="#d6d6d6" stroke-width="1.3"/><line x1="144.9" y1="4.2" x2="144.9" y2="8" stroke="#d6d6d6" stroke-width="1.3"/><line x1="154.2" y1="4.2" x2="154.2" y2="8" stroke="#d6d6d6" stroke-width="1.3"/><line x1="163.5" y1="4.2" x2="163.5" y2="8" stroke="#d6d6d6" stroke-width="1.3"/><line x1="172.8" y1="4.2" x2="172.8" y2="14" stroke="#c8c8c8" stroke-width="1"/><line x1="182.0" y1="4.2" x2="182.0" y2="8" stroke="#d6d6d6" stroke-width="1.3"/><line x1="191.3" y1="4.2" x2="191.3" y2="8" stroke="#d6d6d6" stroke-width="1.3"/><line x1="200.6" y1="4.2" x2="200.6" y2="8" stroke="#d6d6d6" stroke-width="1.3"/><line x1="209.9" y1="4.2" x2="209.9" y2="8" stroke="#d6d6d6" stroke-width="1.3"/><line x1="219.2" y1="4.2" x2="219.2" y2="8" stroke="#d6d6d6" stroke-width="1.3"/><line x1="228.5" y1="4.2" x2="228.5" y2="14" stroke="#c8c8c8" stroke-width="1"/><text x="5.5" y="20.8" font-family="Liberation Sans" font-size="9" fill="#b0b0b0" text-anchor="middle" letter-spacing="0.3">0</text><text x="61.2" y="20.8" font-family="Liberation Sans" font-size="9" fill="#b0b0b0" text-anchor="middle" letter-spacing="0.3">64</text><text x="116.9" y="20.8" font-family="Liberation Sans" font-size="9" fill="#b0b0b0" text-anchor="middle" letter-spacing="0.3">128</text><text x="172.6" y="20.8" font-family="Liberation Sans" font-size="9" fill="#b0b0b0" text-anchor="middle" letter-spacing="0.3">191</text><text x="228.3" y="20.8" font-family="Liberation Sans" font-size="9" fill="#b0b0b0" text-anchor="middle" letter-spacing="0.3">255</text></svg>
<div class="a" style="left:551px;top:570px;width:88px;height:23px;background:#00f010;border-radius:4px;filter:blur(1.6px);box-shadow:0 0 4px 2px rgba(0,220,0,.6)"></div>
<div class="a" style="left:572.5px;top:574.20px;font-size:16.2px;line-height:16.2px;color:#0a870a;font-weight:bold;white-space:nowrap;font-family:'Liberation Sans';">OPEN</div>
<div class="a" style="left:693px;top:570px;width:88px;height:23px;background:#ff0808;border-radius:4px;filter:blur(1.6px);box-shadow:0 0 4px 2px rgba(230,0,0,.6)"></div>
<div class="a" style="left:709.3px;top:574.20px;font-size:16.2px;line-height:16.2px;color:#9a0000;font-weight:bold;white-space:nowrap;font-family:'Liberation Sans';">CLOSE</div>
<div class="a" style="left:0;top:0"><div class="a" style="left:811px;top:88px;width:283px;height:339px;border:1px solid #7b7b7b"></div>
<div class="a" style="left:811px;top:435px;width:283px;height:104px;border:1px solid #7b7b7b"></div>
<div class="a" style="left:811px;top:538px;width:283px;height:66px;border:1px solid #7b7b7b"></div>
<div class="lb" style="left:822px;top:91.24px">CHART</div>
<div class="lb" style="left:822px;top:258.24px">DATATABLE</div>
<div class="lb" style="left:821px;top:444.24px">GET SYMBOLS</div>
<div class="lb" style="left:821px;top:547.24px">PAGE NAVIGATION</div>
<div class="a" style="left:821px;top:116px;width:262px;height:138px;background:#000"></div>
<svg class="a" style="left:0;top:0" width="1100" height="260"><line x1="821" y1="213.5" x2="1083" y2="213.5" stroke="#c81818" stroke-width="1.2"/><polyline points="821.5,135.0 823.3,169.0 825.4,158.5 826.6,182.9 829.0,137.9 830.3,178.9 831.7,151.1 833.5,209.5 835.4,135.0 837.6,210.7 839.0,140.4 841.2,197.9 843.4,139.7 845.8,176.2 847.2,161.2 849.6,176.6 850.8,146.2 852.1,176.5 853.8,187.8 855.3,166.9 857.2,161.0 858.6,189.9 859.8,158.9 861.3,204.4 863.1,174.2 865.4,189.7 867.7,156.2 869.9,172.2 872.3,151.9 874.2,180.6 875.6,146.0 877.4,191.8 878.9,156.0 880.7,185.1 883.0,144.7 884.3,189.7 886.6,163.6 888.4,173.8 890.2,139.5 892.3,211.8 894.3,147.4 896.5,197.9 898.1,151.8 900.5,206.0 902.1,137.1 903.3,159.5 904.7,135.0 906.6,170.1 908.6,173.2 910.3,203.6 912.2,135.0 914.5,185.6 916.0,135.0 918.0,177.2 919.5,153.9 921.4,210.5 923.1,175.6 925.1,198.0 927.2,175.7 929.4,179.7 931.1,141.1 933.2,191.0 934.6,165.0 936.6,196.4 938.4,148.0 940.0,190.8 942.0,158.9 943.9,205.6 946.1,135.3 948.0,216.4 950.1,162.8 952.4,223.5 954.7,146.7 955.9,218.4 957.1,187.9 958.6,189.3 960.6,146.1 963.0,181.3 964.7,143.2 966.9,208.0 968.5,164.9 970.9,204.7 972.3,177.4 974.6,210.4 976.4,169.6 978.7,171.8 980.4,135.0 982.1,200.7 983.4,177.6 985.3,192.2 987.3,162.3 988.7,194.4 990.3,187.1 991.7,202.4 993.6,176.1 995.9,185.1 998.2,194.4 999.6,178.9 1001.2,163.3 1002.4,182.9 1004.6,142.5 1006.4,177.1 1007.5,141.4 1009.4,185.9 1011.8,191.5 1013.5,213.5 1015.2,176.8 1017.2,197.9 1018.8,175.9 1021.1,211.4 1023.3,139.7 1025.7,181.0 1027.8,135.0 1030.1,206.3 1031.7,166.5 1032.8,188.4 1034.7,136.8 1036.7,205.2 1038.3,147.3 1040.6,188.7 1042.7,191.2 1044.3,226.3 1046.1,143.2 1048.4,189.9 1050.5,163.9 1051.8,200.0 1053.0,135.0 1054.8,189.5 1056.6,149.8 1058.1,177.8 1060.2,180.6 1062.6,212.8 1064.3,159.2 1066.3,192.1 1068.5,135.1 1069.9,174.4 1071.1,169.0 1073.0,187.6 1075.3,177.1 1077.4,198.3 1078.9,135.3 1081.0,179.8" fill="none" stroke="#dede3c" stroke-width="1.05" stroke-linejoin="round"/><polyline points="821.5,141.2 824.2,159.0 826.8,170.1 829.2,176.0 832.2,178.3 834.7,178.6 836.5,135.0 838.4,176.2 841.5,160.5 843.6,180.1 846.1,164.3 848.1,193.2 850.4,181.8 853.1,181.8 855.5,183.9 857.3,212.6 860.4,154.2 862.0,213.1 864.9,176.1 867.4,228.5 870.5,189.9 872.0,201.5 873.5,197.2 876.0,192.1 879.0,199.4 881.8,195.4 883.9,175.6 887.1,230.0 889.4,193.9 891.5,231.0 894.0,169.3 895.6,229.1 898.4,163.2 901.0,192.3 903.3,175.7 905.8,189.1 908.4,165.8 911.0,217.5 913.9,167.0 916.9,224.1 919.2,161.7 922.3,202.5 924.0,141.4 926.6,201.6 929.3,166.6 931.1,201.8 932.6,174.9 934.5,178.3 936.6,145.9 938.5,176.7 940.6,188.6 943.1,197.1 946.2,150.5 949.1,190.9 951.5,143.2 954.0,188.7 956.4,146.0 958.5,172.0 960.6,144.8 963.0,201.8 965.0,152.2 966.9,213.4 968.9,155.6 970.3,223.5 972.1,192.7 974.6,205.1 977.1,153.0 979.5,179.4 981.5,151.2 983.0,219.9 985.4,175.1 987.5,207.9 990.6,157.3 993.5,187.8 996.4,159.9 999.5,185.4 1001.8,158.2 1004.7,180.8 1007.3,157.6 1010.5,179.9 1012.3,144.5 1014.9,181.5 1017.4,178.1 1019.0,179.4 1021.8,171.5 1024.3,195.5 1026.3,163.6 1028.6,217.6 1031.2,161.8 1033.5,180.0 1035.2,156.9 1036.8,195.5 1038.6,151.3 1040.6,187.3 1042.2,190.3 1045.4,196.6 1047.4,164.8 1049.9,190.0 1052.5,150.6 1055.4,203.4 1057.5,182.2 1060.5,200.3 1062.0,145.3 1064.2,180.6 1066.3,179.8 1068.0,180.8 1071.0,158.0 1073.7,174.8 1076.3,188.4 1078.0,186.4 1081.2,157.9" fill="none" stroke="#c8c838" stroke-width="0.9" stroke-linejoin="round" opacity="0.85"/></svg>
<div class="a" style="left:828px;top:237px;width:22px;height:9px;background:#f00"></div>
<div class="a" style="left:854px;top:237.39px;font-size:8.6px;line-height:8.6px;color:#fff;font-weight:normal;white-space:nowrap;font-family:'Liberation Sans';">Temperature</div>
<div class="a" style="left:908px;top:237px;width:22px;height:9px;background:#ff0"></div>
<div class="a" style="left:933px;top:237.39px;font-size:8.6px;line-height:8.6px;color:#fff;font-weight:normal;white-space:nowrap;font-family:'Liberation Sans';">Power</div>
<div class="a" style="left:822px;top:281px;width:261px;height:138px;background:#000"></div>
<div class="a" style="left:822px;top:281px;width:261px;height:126px;background:#fff"></div>
<div class="a" style="left:822px;top:281px;width:261px;height:19px;background:linear-gradient(#e9e9e9,#dfdfdf);border-bottom:1px solid #c4c4c4"></div>
<div class="a" style="left:825.8px;top:285.88px;font-size:9.5px;line-height:9.5px;color:#505050;font-weight:normal;white-space:nowrap;font-family:'Liberation Sans';">Name</div>
<div class="a" style="left:929px;top:285.88px;font-size:9.5px;line-height:9.5px;color:#505050;font-weight:normal;white-space:nowrap;font-family:'Liberation Sans';">Value</div>
<div class="a" style="left:1006px;top:285.88px;font-size:9.5px;line-height:9.5px;color:#505050;font-weight:normal;white-space:nowrap;font-family:'Liberation Sans';">Date</div>
<svg class="a" style="left:911px;top:287px" width="10" height="6"><path d="M1 5 L5 1 L9 5 Z" fill="#aaa"/></svg>
<svg class="a" style="left:993px;top:287px" width="10" height="6"><path d="M1 5 L5 1 L9 5 Z" fill="#aaa"/></svg>
<svg class="a" style="left:1071px;top:287px" width="10" height="6"><path d="M1 5 L5 1 L9 5 Z" fill="#aaa"/></svg>
<div class="a" style="left:822px;top:300px;width:261px;height:17px;background:#fff"></div>
<svg class="a" style="left:826px;top:304px" width="12" height="10"><path d="M0 4 L4 4 L2 0 L4 0 L7 4 L11 4 Q12 5 11 6 L7 6 L4 10 L2 10 L4 6 L0 6 Z" fill="#222"/></svg>
<div class="a" style="left:840.5px;top:304.43px;font-size:10px;line-height:10px;color:#222;font-weight:bold;white-space:nowrap;font-family:'Liberation Serif';">vvv</div>
<div class="a" style="left:930px;top:304.45px;font-size:9.8px;line-height:9.8px;color:#333;font-weight:normal;white-space:nowrap;font-family:'Liberation Sans';">71.267091811...</div>
<div class="a" style="left:1006.5px;top:304.43px;font-size:10px;line-height:10px;color:#333;font-weight:normal;white-space:nowrap;font-family:'Liberation Sans';">05/04/22 14:5...</div>
<div class="a" style="left:822px;top:317px;width:261px;height:17px;background:#ececec"></div>
<svg class="a" style="left:826px;top:321px" width="12" height="10"><path d="M0 4 L4 4 L2 0 L4 0 L7 4 L11 4 Q12 5 11 6 L7 6 L4 10 L2 10 L4 6 L0 6 Z" fill="#222"/></svg>
<div class="a" style="left:840.5px;top:321.43px;font-size:10px;line-height:10px;color:#222;font-weight:bold;white-space:nowrap;font-family:'Liberation Serif';">V001_STATUS</div>
<div class="a" style="left:926px;top:321.2px;width:78px;text-align:center;font-size:10px;line-height:10px;color:#333">45</div>
<div class="a" style="left:1006.5px;top:321.43px;font-size:10px;line-height:10px;color:#333;font-weight:normal;white-space:nowrap;font-family:'Liberation Sans';">05/04/22 14:5...</div>
<div class="a" style="left:822px;top:334px;width:261px;height:17px;background:#fff"></div>
<svg class="a" style="left:826px;top:338px" width="12" height="10"><path d="M0 4 L4 4 L2 0 L4 0 L7 4 L11 4 Q12 5 11 6 L7 6 L4 10 L2 10 L4 6 L0 6 Z" fill="#222"/></svg>
<div class="a" style="left:840.5px;top:338.43px;font-size:10px;line-height:10px;color:#222;font-weight:bold;white-space:nowrap;font-family:'Liberation Serif';">V201_STATUS</div>
<div class="a" style="left:926px;top:338.2px;width:78px;text-align:center;font-size:10px;line-height:10px;color:#333">0</div>
<div class="a" style="left:1006.5px;top:338.43px;font-size:10px;line-height:10px;color:#333;font-weight:normal;white-space:nowrap;font-family:'Liberation Sans';">05/04/22 14:5...</div>
<div class="a" style="left:822px;top:351px;width:261px;height:17px;background:#ececec"></div>
<svg class="a" style="left:826px;top:355px" width="12" height="10"><path d="M0 4 L4 4 L2 0 L4 0 L7 4 L11 4 Q12 5 11 6 L7 6 L4 10 L2 10 L4 6 L0 6 Z" fill="#222"/></svg>
<div class="a" style="left:840.5px;top:355.43px;font-size:10px;line-height:10px;color:#222;font-weight:bold;white-space:nowrap;font-family:'Liberation Serif';">V203_STATUS</div>
<div class="a" style="left:926px;top:355.2px;width:78px;text-align:center;font-size:10px;line-height:10px;color:#333">0</div>
<div class="a" style="left:1006.5px;top:355.43px;font-size:10px;line-height:10px;color:#333;font-weight:normal;white-space:nowrap;font-family:'Liberation Sans';">05/04/22 14:5...</div>
<div class="a" style="left:822px;top:368px;width:261px;height:17px;background:#fff"></div>
<svg class="a" style="left:826px;top:372px" width="12" height="10"><path d="M0 4 L4 4 L2 0 L4 0 L7 4 L11 4 Q12 5 11 6 L7 6 L4 10 L2 10 L4 6 L0 6 Z" fill="#222"/></svg>
<div class="a" style="left:840.5px;top:372.43px;font-size:10px;line-height:10px;color:#222;font-weight:bold;white-space:nowrap;font-family:'Liberation Serif';">P100_STATUS</div>
<div class="a" style="left:926px;top:372.2px;width:78px;text-align:center;font-size:10px;line-height:10px;color:#333">0</div>
<div class="a" style="left:1006.5px;top:372.43px;font-size:10px;line-height:10px;color:#333;font-weight:normal;white-space:nowrap;font-family:'Liberation Sans';">05/04/22 14:5...</div>
<div class="a" style="left:822px;top:385px;width:261px;height:17px;background:#ececec"></div>
<svg class="a" style="left:826px;top:389px" width="12" height="10"><path d="M0 4 L4 4 L2 0 L4 0 L7 4 L11 4 Q12 5 11 6 L7 6 L4 10 L2 10 L4 6 L0 6 Z" fill="#222"/></svg>
<div class="a" style="left:840.5px;top:389.43px;font-size:10px;line-height:10px;color:#222;font-weight:bold;white-space:nowrap;font-family:'Liberation Serif';">SET_VALUE_T...</div>
<div class="a" style="left:926px;top:389.2px;width:78px;text-align:center;font-size:10px;line-height:10px;color:#333">18</div>
<div class="a" style="left:1006.5px;top:389.43px;font-size:10px;line-height:10px;color:#333;font-weight:normal;white-space:nowrap;font-family:'Liberation Sans';">05/04/22 14:5...</div>
<div class="a" style="left:925px;top:281px;width:1px;height:124px;background:#cfcfcf"></div>
<div class="a" style="left:1003px;top:281px;width:1px;height:124px;background:#cfcfcf"></div>
<div class="a" style="left:822px;top:402px;width:261px;height:5px;background:linear-gradient(#d0d0d0,#9a9a9a)"></div>
<div class="a" style="left:827px;top:569px;width:98px;height:25px;background:#7c7c7c;border-radius:3px"></div>
<div class="a" style="left:786.3px;top:576.58px;font-size:11.2px;line-height:11.2px;color:#111;font-weight:normal;white-space:nowrap;font-family:'Liberation Sans';letter-spacing:0.1px">GO TO PAGE 1</div>
<div class="a" style="left:949px;top:569px;width:99px;height:25px;background:#878787;border-radius:3px;font-size:11.2px;line-height:25px;text-align:center;color:#000;white-space:nowrap;letter-spacing:0.1px">GO TO TREND</div></div>
<!-- /content -->
<!-- red annotation boxes -->
<svg class="a" style="left:1163px;top:618px" width="12" height="10"><path d="M3 9 L10 2 M6 9 L10 5 M9 9 L10 8" stroke="#777" stroke-width="0.9" stroke-dasharray="1 1"/></svg>

<div class="red" style="left:81px;top:5px;width:1090px;height:620px"></div>
<div class="red" style="left:89px;top:18px;width:154px;height:36px"></div>
<div class="red" style="left:1129px;top:18px;width:36px;height:39px"></div>
<div class="red" style="left:1194px;top:36px;width:38px;height:36px"></div>
</body></html>
